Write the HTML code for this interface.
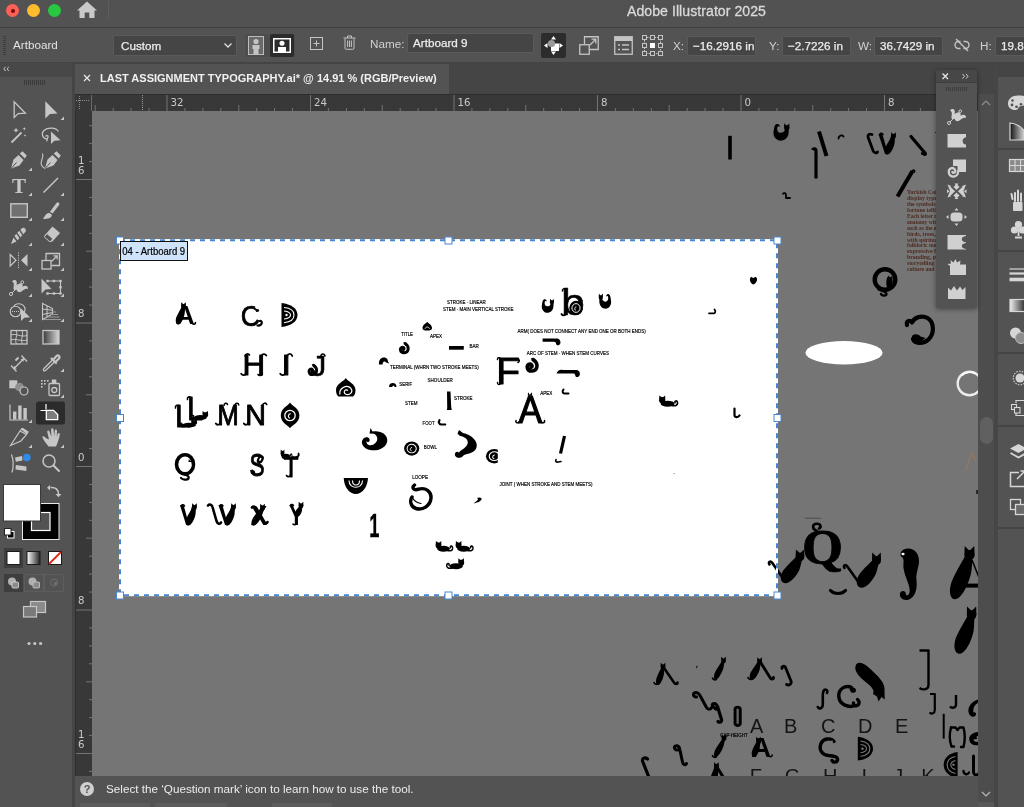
<!DOCTYPE html>
<html><head><meta charset="utf-8"><title>Adobe Illustrator 2025</title>
<style>
*{box-sizing:border-box;margin:0;padding:0}
html,body{width:1024px;height:807px;overflow:hidden;background:#535353}
body{position:relative;will-change:transform;font-family:"Liberation Sans",sans-serif;color:#e2e2e2;font-size:11.7px}
.abs,body>div,body>svg{position:absolute}
.t{position:absolute;white-space:nowrap;line-height:14px}
#titlebar{left:0;top:0;width:1024px;height:27px;background:#525252}
#titleline{left:0;top:27px;width:1024px;height:1px;background:#3f3f3f}
#ctrl{left:0;top:28px;width:1024px;height:35px;background:#535353;border-bottom:1px solid #444}
#tabbar{left:75px;top:63px;width:949px;height:31px;background:#454545}
#tab{left:75px;top:64px;width:374px;height:30px;background:#535353}
#lefthead{left:0;top:63px;width:72px;height:14px;background:#484848}
#leftbody{left:0;top:77px;width:72px;height:730px;background:#535353}
#leftsep{left:72px;top:63px;width:3px;height:744px;background:#454545}
#canvas{left:92px;top:111px;width:886px;height:665px;background:#757575;overflow:hidden}
#hruler{left:75px;top:94px;width:903px;height:17px;background:#383838;overflow:hidden}
#vruler{left:75px;top:111px;width:17px;height:665px;background:#383838;overflow:hidden}
#status{left:75px;top:776px;width:949px;height:31px;background:#535353}
.fld{position:absolute;background:#454545;border:1px solid #5a5a5a;border-radius:2px;color:#ececec;white-space:nowrap;line-height:14px;-webkit-text-stroke:.25px #ececec}
.lbl{color:#d0d0d0}
</style></head><body>
<div id="titlebar"></div>
<div id="titleline"></div>
<div id="ctrl"></div>
<div id="tabbar"></div>
<div id="tab"></div>
<div id="lefthead"></div>
<div id="leftbody"></div>
<div id="leftsep"></div>
<div id="status"></div>
<!-- title bar -->
<div style="left:6px;top:4px;width:13px;height:13px;border-radius:50%;background:#fe5f57"></div>
<div style="left:10.5px;top:8.5px;width:4px;height:4px;border-radius:50%;background:#7a0a05"></div>
<div style="left:27px;top:4px;width:13px;height:13px;border-radius:50%;background:#febc2e"></div>
<div style="left:48px;top:4px;width:13px;height:13px;border-radius:50%;background:#28c840"></div>
<svg style="left:76px;top:1px" width="22" height="18" viewBox="0 0 22 18"><path d="M11 0.5 L1 9.5 H3.5 V17 H8.7 V11.5 H13.3 V17 H18.5 V9.5 H21 Z" fill="#c9c9c9"/></svg>
<div style="left:108px;top:1px;width:1px;height:18px;background:#5e5e5e"></div>
<div class="t" style="left:627px;top:3px;font-size:14.1px;color:#d9d9d9;line-height:16px;-webkit-text-stroke:.3px #d9d9d9;letter-spacing:.05px">Adobe Illustrator 2025</div>
<!-- control bar -->
<div style="left:3px;top:36px;width:3px;height:20px;background:repeating-linear-gradient(#3e3e3e 0 1px,#535353 1px 2px)"></div>
<div class="t" style="left:13px;top:38px">Artboard</div>
<div class="fld" style="left:113px;top:35px;width:124px;height:21px;padding:3px 0 0 7px">Custom</div>
<svg style="left:223px;top:42px" width="10" height="7" viewBox="0 0 10 7"><path d="M1.5 1.5 L5 5 L8.5 1.5" fill="none" stroke="#e0e0e0" stroke-width="1.3"/></svg>
<div style="left:245px;top:34px;width:50px;height:23px;background:#4d4d4d;border-radius:2px"></div>
<svg style="left:248px;top:36px" width="16" height="19" viewBox="0 0 16 19"><rect x="0.5" y="0.5" width="15" height="18" fill="#6a6a6a" stroke="#bdbdbd"/><circle cx="8" cy="5.5" r="2.6" fill="#c4c4c4"/><path d="M4.5 9 H11.5 V13 H10.5 V18 H5.5 V13 H4.5 Z" fill="#c4c4c4"/></svg>
<div style="left:270px;top:34px;width:24px;height:23px;background:#2c2c2c;border-radius:2px"></div>
<svg style="left:273px;top:38px" width="18" height="15" viewBox="0 0 18 15"><rect x="0.75" y="0.75" width="16.5" height="13.5" fill="#2c2c2c" stroke="#fff" stroke-width="1.5"/><circle cx="9" cy="5.3" r="2.5" fill="#fff"/><path d="M5 9 H13 V14 H5 Z" fill="#fff"/></svg>
<svg style="left:310px;top:37px" width="13" height="13" viewBox="0 0 13 13"><rect x="0.5" y="0.5" width="12" height="12" fill="none" stroke="#c4c4c4"/><path d="M6.5 3.5 V9.5 M3.5 6.5 H9.5" stroke="#c4c4c4" stroke-width="1"/></svg>
<svg style="left:343px;top:35px" width="13" height="15" viewBox="0 0 13 15"><path d="M0.5 3 H12.5 M4.5 3 V1 H8.5 V3 M2 3.5 V13 Q2 14.3 3.3 14.3 H9.7 Q11 14.3 11 13 V3.5 M4.6 5.5 V12 M6.5 5.5 V12 M8.4 5.5 V12" fill="none" stroke="#c4c4c4" stroke-width="1"/></svg>
<div class="t lbl" style="left:370px;top:37px">Name:</div>
<div class="fld" style="left:407px;top:33px;width:127px;height:20px;padding:2px 0 0 5px">Artboard 9</div>
<div style="left:541px;top:33px;width:25px;height:25px;background:#2c2c2c;border-radius:2px"></div>
<svg style="left:543px;top:35px" width="21" height="21" viewBox="0 0 21 21"><path d="M10.5 1 L13 4.5 H8 Z M10.5 20 L13 16.5 H8 Z M1 10.5 L4.5 8 V13 Z M20 10.5 L16.5 8 V13 Z" fill="#fff"/><rect x="8" y="8.5" width="8" height="7.5" fill="#fff"/><circle cx="8.5" cy="8.5" r="3.6" fill="#9a9a9a"/></svg>
<svg style="left:579px;top:36px" width="20" height="19" viewBox="0 0 20 19"><rect x="0.75" y="8.75" width="9.5" height="9.5" fill="none" stroke="#c4c4c4" stroke-width="1.3"/><path d="M5.5 8.5 V0.75 H19.25 V13.5 H10.5" fill="none" stroke="#c4c4c4" stroke-width="1.3"/><path d="M11 9 L16.5 3.5 M12.5 3.2 H16.8 V7.5" fill="none" stroke="#c4c4c4" stroke-width="1.3"/></svg>
<svg style="left:614px;top:36px" width="19" height="19" viewBox="0 0 19 19"><rect x="0.75" y="0.75" width="17.5" height="17.5" fill="none" stroke="#c4c4c4" stroke-width="1.3"/><rect x="1" y="1" width="17" height="4" fill="#c4c4c4"/><path d="M4 9 H6 M8 9 H15 M4 13.5 H6 M8 13.5 H15" stroke="#c4c4c4" stroke-width="1.6"/></svg>
<svg style="left:642px;top:35px" width="21" height="21" viewBox="0 0 21 21"><path d="M2.5 2.5 H18.5 V18.5 H2.5 Z" fill="none" stroke="#c4c4c4" stroke-width="1" stroke-dasharray="1.5 1"/><g fill="#535353" stroke="#c4c4c4" stroke-width="1"><rect x="0.5" y="0.5" width="4" height="4"/><rect x="8.5" y="0.5" width="4" height="4"/><rect x="16.5" y="0.5" width="4" height="4"/><rect x="0.5" y="8.5" width="4" height="4"/><rect x="16.5" y="8.5" width="4" height="4"/><rect x="0.5" y="16.5" width="4" height="4"/><rect x="8.5" y="16.5" width="4" height="4"/><rect x="16.5" y="16.5" width="4" height="4"/></g><rect x="8" y="8" width="5" height="5" fill="#fff"/></svg>
<div class="t lbl" style="left:673px;top:39px">X:</div>
<div class="fld" style="left:687px;top:36px;width:69px;height:20px;padding:2px 0 0 5px">−16.2916 in</div>
<div class="t lbl" style="left:769px;top:39px">Y:</div>
<div class="fld" style="left:782px;top:36px;width:69px;height:20px;padding:2px 0 0 5px">−2.7226 in</div>
<div class="t lbl" style="left:858px;top:39px">W:</div>
<div class="fld" style="left:874px;top:36px;width:69px;height:20px;padding:2px 0 0 5px">36.7429 in</div>
<svg style="left:954px;top:38px" width="16" height="14" viewBox="0 0 16 14"><path d="M6.5 10.5 H4.5 A3.5 3.5 0 0 1 4.5 3.5 H6.5 M9.5 3.5 H11.5 A3.5 3.5 0 0 1 11.5 10.5 H9.5" fill="none" stroke="#c4c4c4" stroke-width="1.4"/><path d="M2 1 L14 13" stroke="#c4c4c4" stroke-width="1.4"/></svg>
<div class="t lbl" style="left:980px;top:39px">H:</div>
<div class="fld" style="left:995px;top:36px;width:40px;height:20px;padding:2px 0 0 5px">19.8</div>
<!-- tab -->
<svg style="left:83px;top:74px" width="8" height="8" viewBox="0 0 8 8"><path d="M1 1 L7 7 M7 1 L1 7" stroke="#e8e8e8" stroke-width="1.3"/></svg>
<div class="t" style="left:100px;top:71px;font-size:11px;font-weight:bold;color:#f0f0f0">LAST ASSIGNMENT TYPOGRAPHY.ai* @ 14.91 % (RGB/Preview)</div>
<!-- left head -->
<div class="t" style="left:3px;top:62px;font-size:10px;color:#c8c8c8;letter-spacing:0px">‹‹</div>
<div style="left:24px;top:80px;width:21px;height:5px;background:repeating-linear-gradient(90deg,#3b3b3b 0 1px,#535353 1px 2px)"></div>
<!-- status -->
<div style="left:80px;top:782px;width:14px;height:14px;border-radius:50%;background:#cfcfcf;color:#535353;font-weight:bold;font-size:11px;text-align:center;line-height:14px">?</div>
<div class="t" style="left:106px;top:782px;color:#ececec">Select the ‘Question mark’ icon to learn how to use the tool.</div>
<div style="left:80px;top:803px;width:70px;height:4px;background:#5c5c5c"></div>
<div style="left:155px;top:803px;width:72px;height:4px;background:#5c5c5c"></div>
<div style="left:272px;top:803px;width:60px;height:4px;background:#5c5c5c"></div>
<div id="canvas"></div>
<div id="hruler"></div><div id="vruler"></div>
<svg style="left:75px;top:94px" width="903" height="17" viewBox="75 94 903 17" font-family="'DejaVu Sans','Liberation Sans',sans-serif" font-size="10.2" fill="#c9c9c9"><rect x="75" y="94" width="903" height="1" fill="#2e2e2e"/><path d="M95.2 105V111M113.2 108V111M131.1 108V111M149.1 108V111M167.0 95V111M184.9 108V111M202.9 108V111M220.8 108V111M238.8 105V111M256.7 108V111M274.6 108V111M292.6 108V111M310.5 95V111M328.4 108V111M346.4 108V111M364.3 108V111M382.2 105V111M400.2 108V111M418.1 108V111M436.1 108V111M454.0 95V111M471.9 108V111M489.9 108V111M507.8 108V111M525.8 105V111M543.7 108V111M561.6 108V111M579.6 108V111M597.5 95V111M615.4 108V111M633.4 108V111M651.3 108V111M669.2 105V111M687.2 108V111M705.1 108V111M723.1 108V111M741.0 95V111M758.9 108V111M776.9 108V111M794.8 108V111M812.8 105V111M830.7 108V111M848.6 108V111M866.6 108V111M884.5 95V111M902.4 108V111M920.4 108V111M938.3 108V111M956.2 105V111M974.2 108V111" stroke="#747474" stroke-width="1" fill="none"/><text x="170.5" y="105.5">32</text><text x="314.0" y="105.5">24</text><text x="457.5" y="105.5">16</text><text x="601.0" y="105.5">8</text><text x="744.5" y="105.5">0</text><text x="888.0" y="105.5">8</text><path d="M91.5 95V111" stroke="#6a6a6a" stroke-width="1"/><path d="M79.5 96V110M76 100.5H90" stroke="#8a8a8a" stroke-width="1" stroke-dasharray="1 1" fill="none"/><path d="M142.5 95V110" stroke="#9a9a9a" stroke-width="1" stroke-dasharray="1 1" fill="none"/></svg>
<svg style="left:75px;top:111px" width="17" height="665" viewBox="75 111 17 665" font-family="'DejaVu Sans','Liberation Sans',sans-serif" font-size="10.2" fill="#c9c9c9"><rect x="75" y="111" width="1" height="665" fill="#2e2e2e"/><path d="M89 771.4H92M76 753.5H92M89 735.6H92M89 717.6H92M89 699.7H92M86 681.8H92M89 663.8H92M89 645.9H92M89 627.9H92M76 610.0H92M89 592.1H92M89 574.1H92M89 556.2H92M86 538.2H92M89 520.3H92M89 502.4H92M89 484.4H92M76 466.5H92M89 448.6H92M89 430.6H92M89 412.7H92M86 394.8H92M89 376.8H92M89 358.9H92M89 340.9H92M76 323.0H92M89 305.1H92M89 287.1H92M89 269.2H92M86 251.2H92M89 233.3H92M89 215.4H92M89 197.4H92M76 179.5H92M89 161.6H92M89 143.6H92M89 125.7H92" stroke="#747474" stroke-width="1" fill="none"/><text x="78" y="164.0">1</text><text x="78" y="173.5">6</text><text x="78" y="317.0">8</text><text x="78" y="460.5">0</text><text x="78" y="604.0">8</text><text x="78" y="738.0">1</text><text x="78" y="747.5">6</text></svg>
<svg style="left:0;top:94px" width="74" height="570" viewBox="0 94 74 570" fill="none" stroke="none">
<defs>
<linearGradient id="gr1" x1="0" x2="1" y1="0" y2="0"><stop offset="0" stop-color="#3a3a3a"/><stop offset="1" stop-color="#d8d8d8"/></linearGradient>
<linearGradient id="gr2" x1="0" x2="1" y1="0" y2="0"><stop offset="0" stop-color="#ffffff"/><stop offset="1" stop-color="#222"/></linearGradient>
</defs>
<!-- row1 selection -->
<path d="M14.2 101.8 V117.5 L18.2 113.6 L25.4 113.2 Z" stroke="#c6c6c6" stroke-width="1.3" stroke-linejoin="miter"/>
<path d="M45.3 101.3 V118.5 L50 114 L57.5 113.6 Z" fill="#c6c6c6"/>
<path d="M64 120 v-3.5 l-3.5 3.5 z" fill="#c6c6c6"/>
<!-- row2 wand / lasso -->
<path d="M11.5 142.5 L21.5 132.5" stroke="#c6c6c6" stroke-width="1.8"/>
<path d="M16 127.5 l.8 2 2 .8 -2 .8 -.8 2 -.8 -2 -2 -.8 2 -.8z M24.3 127 l.5 1.3 1.3 .5 -1.3 .5 -.5 1.3 -.5 -1.3 -1.3 -.5 1.3 -.5z M25 134 l.4 1 1 .4 -1 .4 -.4 1 -.4 -1 -1 -.4 1 -.4z" fill="#c6c6c6"/>
<path d="M48 139 C42 139 41 133 44 130.5 C48 127 56 127.5 58.5 131.5 M45.5 136.5 c1 -1.5 3 -1 2.5 .8 c-.5 1.5 -1.5 2 -1 4" stroke="#c6c6c6" stroke-width="1.2"/>
<path d="M51 131.5 V144 L54.3 140.8 L60.5 140.3 Z" fill="#c6c6c6"/>
<!-- row3 pen / curvature -->
<path d="M11 168.5 L13.5 159.5 L18.5 155 L23.5 160 L19.5 165.5 Z M19.8 153.6 L22.5 151.2 L26.8 155.6 L24.8 158.6 Z" fill="#c6c6c6"/>
<path d="M11.5 168 L16.5 162.5" stroke="#535353" stroke-width="1"/>
<path d="M32 171 v-3.5 l-3.5 3.5 z" fill="#c6c6c6"/>
<path d="M45 168.5 L47.5 159.5 L52.5 155 L57.5 160 L53.5 165.5 Z M53.8 153.6 L56.5 151.2 L60.8 155.6 L58.8 158.6 Z" fill="#c6c6c6"/>
<path d="M45.5 168 L50.5 162.5" stroke="#535353" stroke-width="1"/>
<path d="M42.5 153.5 C44.5 158 39.5 161 41.5 165 C42.5 167.5 44 168 45 168.5" stroke="#c6c6c6" stroke-width="1.1"/>
<!-- row4 type / line -->
<text x="19" y="192.5" text-anchor="middle" font-family="'Liberation Serif',serif" font-weight="bold" font-size="21" fill="#c6c6c6">T</text>
<path d="M32 196 v-3.5 l-3.5 3.5 z" fill="#c6c6c6"/>
<path d="M43.5 192.5 L58 178" stroke="#c6c6c6" stroke-width="1.5"/>
<path d="M64 196 v-3.5 l-3.5 3.5 z" fill="#c6c6c6"/>
<!-- row5 rect / brush -->
<rect x="10.8" y="203.8" width="16.5" height="13.5" fill="#707070" stroke="#c6c6c6" stroke-width="1.4"/>
<path d="M32 221 v-3.5 l-3.5 3.5 z" fill="#c6c6c6"/>
<path d="M58.2 202.5 C59.5 203 59.8 204 59 205.2 L52.5 213.5 L50 211.8 L56.3 203.2 C56.9 202.4 57.5 202.2 58.2 202.5 Z M49.2 212.8 L51.8 214.8 C52 217.5 49 219.5 42.5 218.8 C45 217.5 45 213.5 49.2 212.8 Z" fill="#c6c6c6"/>
<path d="M64 221 v-3.5 l-3.5 3.5 z" fill="#c6c6c6"/>
<!-- row6 shaper / eraser -->
<path d="M11 244 L13.5 237.5 L16.5 241.5 Z M14.5 236 L16.3 233.8 L19.5 238.3 L17.5 240.3 Z M17.3 232.8 L19.2 230.8 L22.3 235.2 L20.4 237.2 Z M20.3 229.8 L22 228.2 C24 226.5 27 229.5 25.5 231.8 L23.3 234.2 Z" fill="#c6c6c6"/>
<path d="M32 246 v-3.5 l-3.5 3.5 z" fill="#c6c6c6"/>
<path d="M52.5 226.5 L60 233 L52 242 L44.5 235.5 Z" fill="#c6c6c6"/>
<path d="M44.2 236.8 L47 233.6 L52.8 238.8 L50 242 Z" fill="#535353" stroke="#c6c6c6" stroke-width="1"/>
<path d="M64 246 v-3.5 l-3.5 3.5 z" fill="#c6c6c6"/>
<!-- row7 reflect / scale -->
<path d="M10.2 254.5 V266 L16 260.2 Z" stroke="#c6c6c6" stroke-width="1.2"/>
<path d="M27.5 254 V266.5 L21 260.2 Z" fill="#c6c6c6"/>
<path d="M18.5 252.5 V269" stroke="#c6c6c6" stroke-width="1" stroke-dasharray="1.2 1.2"/>
<path d="M32 271 v-3.5 l-3.5 3.5 z" fill="#c6c6c6"/>
<rect x="42" y="260.5" width="9" height="8.5" stroke="#c6c6c6" stroke-width="1.3"/>
<path d="M46 260 V253.5 H59.5 V265.5 H51.5" stroke="#c6c6c6" stroke-width="1.3"/>
<path d="M51.5 261.5 L57 256 M53.5 255.8 H57.2 V259.5" stroke="#c6c6c6" stroke-width="1.2"/>
<path d="M64 271 v-3.5 l-3.5 3.5 z" fill="#c6c6c6"/>
<!-- row8 width / free transform -->
<path d="M12 281.5 C15 278 18 281 16.5 285 C20 282 24 283.5 22.5 287 C25.5 284.5 28.5 286.5 28 289 C25.5 288 23.5 290 21.5 291.5 C19.5 293 17 292 16.5 289.5 C15 291 13 290 13.5 287.5 C14 285 14.5 283 12 281.5 Z" fill="#c6c6c6"/>
<path d="M11.5 293.5 L22 282.5" stroke="#c6c6c6" stroke-width="1"/>
<circle cx="11" cy="294" r="1.6" fill="#535353" stroke="#c6c6c6" stroke-width="1"/>
<circle cx="22.3" cy="282.2" r="1.4" fill="#535353" stroke="#c6c6c6" stroke-width="1"/>
<path d="M32 297 v-3.5 l-3.5 3.5 z" fill="#c6c6c6"/>
<path d="M41.5 278.5 V293.5 L45.5 289.5 L51.5 289 Z" fill="#c6c6c6"/>
<path d="M47.5 281 H60.5 V293.5 H47.5" stroke="#c6c6c6" stroke-width="1.1"/>
<g fill="#c6c6c6"><rect x="46.3" y="279.8" width="2.4" height="2.4"/><rect x="59.3" y="279.8" width="2.4" height="2.4"/><rect x="59.3" y="292.3" width="2.4" height="2.4"/><rect x="46.3" y="292.3" width="2.4" height="2.4"/><rect x="52.8" y="292.3" width="2.4" height="2.4"/><rect x="59.3" y="286" width="2.4" height="2.4"/><rect x="52.8" y="279.8" width="2.4" height="2.4"/></g>
<path d="M64 297 v-3.5 l-3.5 3.5 z" fill="#c6c6c6"/>
<!-- row9 shape builder / perspective -->
<circle cx="15.5" cy="311.5" r="5.3" stroke="#c6c6c6" stroke-width="1.1"/>
<path d="M14 306.5 C15 303 22 302.5 24.5 307 C25.5 309 25 311 24 312" stroke="#c6c6c6" stroke-width="1.1"/>
<path d="M12 311.5 H19" stroke="#c6c6c6" stroke-width="1" stroke-dasharray="1 1"/>
<path d="M21 308.5 V321 L24.3 317.8 L30 317.3 Z" fill="#c6c6c6"/>
<path d="M32 322 v-3.5 l-3.5 3.5 z" fill="#c6c6c6"/>
<path d="M42.5 303.5 V319.5 L52.5 314 V308.5 Z M47 306 V317 M42.5 309 L52.5 310.3 M42.5 314.5 L52.5 312.5" stroke="#c6c6c6" stroke-width="1.1"/>
<path d="M52 312 H56 M50 314.5 H58 M47.5 317 H59.5 M44 319.5 H61" stroke="#a0a0a0" stroke-width=".9"/>
<path d="M64 322 v-3.5 l-3.5 3.5 z" fill="#c6c6c6"/>
<!-- row10 mesh / gradient -->
<rect x="11" y="330.5" width="16" height="13.5" stroke="#c6c6c6" stroke-width="1.3"/>
<path d="M11 335 C16 333 21 337.5 27 335.5 M11 340 C16 338 21 342 27 340 M16 330.5 C18.5 335 14 339.5 16.5 344 M22 330.5 C24 335 20 339.5 22.5 344" stroke="#c6c6c6" stroke-width="1"/>
<rect x="43" y="330.5" width="16" height="13.5" fill="url(#gr1)" stroke="#c6c6c6" stroke-width="1.3"/>
<!-- row11 measure / eyedropper -->
<path d="M13.5 369 L24 358.5 M11 365.5 L16.5 371.5 M21.5 355.5 L27 361.5" stroke="#c6c6c6" stroke-width="1.3"/>
<path d="M13.5 369 l.5 -3.3 2.8 2.8z M24 358.5 l-.5 3.3 -2.8 -2.8z" fill="#c6c6c6"/>
<path d="M15.5 360.5 L18.5 357.5" stroke="#c6c6c6" stroke-width="2"/>
<path d="M52.5 360 L44 368.5 C42.5 370 44 371.8 45.8 370.3 L54.5 362" stroke="#c6c6c6" stroke-width="1.3"/>
<path d="M51.5 358.5 L56 363 M53 360 L56.5 356 C58 354.5 60.5 356.5 59 358.5 L55.2 362.2" stroke="#c6c6c6" stroke-width="2.2" stroke-linecap="round"/>
<path d="M64 372 v-3.5 l-3.5 3.5 z" fill="#c6c6c6"/>
<!-- row12 blend / symbol sprayer -->
<rect x="9.3" y="380.3" width="8" height="8" fill="#c6c6c6"/>
<circle cx="19.5" cy="387" r="4.3" fill="#8e8e8e"/>
<circle cx="24" cy="391" r="4" fill="#535353" stroke="#c6c6c6" stroke-width="1.2"/>
<rect x="49" y="383.5" width="10.5" height="12" rx="1" stroke="#c6c6c6" stroke-width="1.3"/>
<rect x="51.8" y="379.5" width="4.5" height="3.5" fill="#c6c6c6"/>
<circle cx="54.3" cy="390" r="2.5" stroke="#c6c6c6" stroke-width="1.3"/>
<g fill="#c6c6c6"><rect x="41" y="380" width="1.6" height="1.6"/><rect x="44" y="380" width="1.6" height="1.6"/><rect x="47" y="380" width="1.6" height="1.6"/><rect x="41" y="383" width="1.6" height="1.6"/><rect x="44" y="383" width="1.6" height="1.6"/><rect x="41" y="386" width="1.6" height="1.6"/></g>
<path d="M64 398 v-3.5 l-3.5 3.5 z" fill="#c6c6c6"/>
<!-- row13 graph / artboard -->
<path d="M10 404.5 V420 H28" stroke="#c6c6c6" stroke-width="1.2"/>
<rect x="13" y="411.5" width="3.4" height="8" fill="#c6c6c6"/><rect x="18.2" y="405.5" width="3.4" height="14" fill="#c6c6c6"/><rect x="23.4" y="408" width="3.4" height="11.5" fill="#c6c6c6"/>
<path d="M32 423 v-3.5 l-3.5 3.5 z" fill="#c6c6c6"/>
<rect x="36" y="401.5" width="29" height="23" rx="2.5" fill="#2b2b2b"/>
<path d="M46 404 V409.5 M40.5 410.5 H46" stroke="#fff" stroke-width="1.2"/>
<path d="M46.3 410.3 H53.5 L57.7 414.5 V419.7 H46.3 Z" fill="#7c7c7c" stroke="#fff" stroke-width="1.3"/>
<!-- row14 slice / hand -->
<path d="M10.5 445.5 L20 431 L26.5 434.5 L21 441 Z M20 431 L22 428.5 L28 432 L26.5 434.5" stroke="#c6c6c6" stroke-width="1.2"/>
<path d="M21 429.5 L23 428 L28.3 431.8 L26.8 434 Z" fill="#c6c6c6"/>
<path d="M32 448 v-3.5 l-3.5 3.5 z" fill="#c6c6c6"/>
<path d="M46.5 438.5 C44 436 42 435.5 42.5 437.5 C43.5 440 46 443 48.5 446.5 H56 C57.5 443 59.5 438 59.8 434.5 C60 432.5 58 432.5 57.5 434.5 L56.8 437.5 L57 431 C57 429 54.8 429 54.7 431 L54.3 436.5 L53.5 429.5 C53.2 427.5 51 428 51.1 430 L51.4 436.8 L49.5 431.5 C48.8 429.8 46.8 430.5 47.3 432.3 L49 439.5 Z" fill="#c6c6c6"/>
<path d="M64 448 v-3.5 l-3.5 3.5 z" fill="#c6c6c6"/>
<!-- row15 puppet / zoom -->
<path d="M11.5 454.5 C13.5 460 13.5 467 12 472.5" stroke="#c6c6c6" stroke-width="1.2"/>
<path d="M15 457.5 L22 456 L22.5 460.5 L15.8 461.8 Z M15.8 465 L26.5 466.5 L26.3 471 L15.5 469.5 Z" fill="#c6c6c6"/>
<circle cx="26.8" cy="457.5" r="3.8" fill="#2d8ceb"/>
<circle cx="49" cy="461" r="6" stroke="#c6c6c6" stroke-width="1.5"/>
<path d="M53.5 465.5 L59 471" stroke="#c6c6c6" stroke-width="2" stroke-linecap="round"/>
<!-- fill/stroke -->
<rect x="22.5" y="503.5" width="36.5" height="36" fill="#000" stroke="#e8e8e8" stroke-width="1"/>
<rect x="31.5" y="512.5" width="18.5" height="18" fill="#535353" stroke="#fff" stroke-width="1.2"/>
<rect x="3.5" y="484.5" width="37" height="36.5" fill="#fff" stroke="#3a3a3a" stroke-width="1"/>
<path d="M50.5 487.5 C55.5 487 58.5 489.5 58.5 494.5" stroke="#c6c6c6" stroke-width="1.6"/>
<path d="M50 485 V490.5 L47 487.8 Z M55.5 494 H61.5 L58.5 497.2 Z" fill="#c6c6c6"/>
<rect x="7.5" y="531.5" width="6.5" height="6.5" fill="#000" stroke="#fff" stroke-width="1"/>
<rect x="4.5" y="528.5" width="6.5" height="6.5" fill="#fff" stroke="#222" stroke-width="1"/>
<!-- color modes -->
<rect x="4" y="548" width="19" height="20" fill="#3e3e3e"/>
<rect x="7" y="551.5" width="13" height="13" fill="#fff" stroke="#1a1a1a" stroke-width="1"/>
<rect x="27" y="551.5" width="13" height="13" fill="url(#gr2)" stroke="#1a1a1a" stroke-width="1"/>
<rect x="48.5" y="551.5" width="13" height="13" fill="#fff" stroke="#1a1a1a" stroke-width="1"/>
<path d="M49 564 L61 552" stroke="#e0261c" stroke-width="1.8"/>
<!-- draw modes -->
<rect x="4" y="574" width="19" height="18" fill="#3e3e3e"/>
<rect x="24.5" y="574.5" width="19" height="17" stroke="#5d5d5d" stroke-width="1"/>
<rect x="44.5" y="574.5" width="19" height="17" stroke="#5d5d5d" stroke-width="1"/>
<circle cx="12" cy="581.5" r="4" fill="#b0b0b0"/><rect x="12" y="582" width="6.5" height="6" rx="1" fill="#8a8a8a" stroke="#ddd" stroke-width=".8"/>
<circle cx="32.5" cy="581.5" r="4" fill="#b0b0b0"/><rect x="33" y="582" width="6.5" height="6" rx="1" fill="#8a8a8a" stroke="#ccc" stroke-width=".8"/>
<circle cx="54" cy="582.5" r="3.5" stroke="#6e6e6e" stroke-width="1"/><circle cx="55.5" cy="583.5" r="1.8" fill="#6e6e6e"/>
<!-- screen mode -->
<rect x="30.5" y="601.5" width="15" height="11" fill="#8a8a8a" stroke="#c6c6c6" stroke-width="1.2"/>
<rect x="23.500" y="606.5" width="13" height="10.500" fill="#7a7a7a" stroke="#c6c6c6" stroke-width="1.2"/>
<circle cx="29" cy="643.5" r="1.6" fill="#c6c6c6"/><circle cx="34.800" cy="643.5" r="1.6" fill="#c6c6c6"/><circle cx="40.600" cy="643.5" r="1.6" fill="#c6c6c6"/>
</svg>
<!-- scrollbar + right dock -->
<div style="left:978px;top:94px;width:16px;height:708px;background:#4d4d4d"></div>
<div style="left:978px;top:802px;width:16px;height:5px;background:#585858"></div>
<div style="left:994px;top:63px;width:4px;height:744px;background:#464646"></div>
<div style="left:998px;top:77px;width:26px;height:730px;background:#535353"></div>
<div style="left:998px;top:148px;width:26px;height:2px;background:#454545"></div>
<div style="left:998px;top:250px;width:26px;height:2px;background:#454545"></div>
<div style="left:998px;top:352px;width:26px;height:2px;background:#454545"></div>
<div style="left:998px;top:425px;width:26px;height:2px;background:#454545"></div>
<div style="left:998px;top:527px;width:26px;height:2px;background:#454545"></div>
<div style="left:980px;top:417px;width:13px;height:27px;border-radius:6.5px;background:#606060"></div>
<svg style="left:980px;top:99px" width="12" height="8" viewBox="0 0 12 8"><path d="M2 6 L6 2 L10 6" fill="none" stroke="#8e8e8e" stroke-width="1.2"/></svg>
<svg style="left:980px;top:790px" width="12" height="8" viewBox="0 0 12 8"><path d="M2 2 L6 6 L10 2" fill="none" stroke="#b8b8b8" stroke-width="1.2"/></svg>
<svg style="left:998px;top:77px" width="26" height="460" viewBox="998 77 26 460" fill="none">
<defs><linearGradient id="cg" x1="0" x2="1"><stop offset="0" stop-color="#111"/><stop offset="1" stop-color="#eee"/></linearGradient>
<linearGradient id="gg" x1="0" x2="1"><stop offset="0" stop-color="#eee"/><stop offset="1" stop-color="#222"/></linearGradient></defs>
<!-- palette -->
<path d="M1018 95.500 C1012 95.500 1008 99 1008 103.500 C1008 108 1012 110.500 1016 110 C1018.500 109.700 1018 107.500 1019.500 106.500 C1021 105.500 1024 106.500 1026 104 V96.500 C1023.500 95.700 1021 95.500 1018 95.500 Z" fill="#d6d6d6"/>
<g fill="#535353"><circle cx="1012" cy="105" r="1.400"/><circle cx="1016.500" cy="106.800" r="1.400"/><circle cx="1012.500" cy="100.500" r="1.300"/><circle cx="1021" cy="104.300" r="1.300"/></g>
<!-- color guide -->
<path d="M1010 123 V140 H1026 V133 C1022 127 1016 123.500 1010 123 Z" fill="url(#cg)" stroke="#d6d6d6" stroke-width="1.200"/>
<!-- swatches -->
<rect x="1009.500" y="159.500" width="16" height="12" fill="#8a8a8a" stroke="#d6d6d6" stroke-width="1.200"/>
<path d="M1009.500 165.500 H1026 M1015 159.500 V171.500 M1020.500 159.500 V171.500" stroke="#d6d6d6" stroke-width="1.100"/>
<!-- brushes -->
<rect x="1013" y="202" width="9.500" height="9" rx="1" fill="#d6d6d6"/>
<path d="M1015 201 V193 M1018 201 V190.500 M1021 201 V193.500 M1012.500 199 L1011.500 194" stroke="#d6d6d6" stroke-width="2" stroke-linecap="round"/>
<!-- symbols club -->
<circle cx="1018.500" cy="224.500" r="3.600" fill="#d6d6d6"/><circle cx="1014.500" cy="230" r="3.600" fill="#d6d6d6"/><circle cx="1022.500" cy="230" r="3.600" fill="#d6d6d6"/>
<path d="M1018.500 228 V236 M1015 237.500 H1022" stroke="#d6d6d6" stroke-width="1.800"/>
<!-- stroke -->
<path d="M1009.500 269 H1026" stroke="#d6d6d6" stroke-width="1.200"/><path d="M1009.500 273.500 H1026" stroke="#d6d6d6" stroke-width="2.200"/><path d="M1009.500 279.500 H1026" stroke="#d6d6d6" stroke-width="3.600"/>
<!-- gradient -->
<rect x="1010" y="299.500" width="16" height="12" fill="url(#gg)" stroke="#d6d6d6" stroke-width="1.200"/>
<!-- transparency -->
<circle cx="1015.500" cy="333" r="5.500" fill="#d6d6d6"/><circle cx="1021" cy="338" r="5.500" fill="#8c8c8c" stroke="#bdbdbd" stroke-width="1"/>
<!-- appearance -->
<circle cx="1020" cy="378" r="6.800" stroke="#d6d6d6" stroke-width="1.100" stroke-dasharray="1.500 1.300"/><circle cx="1020" cy="378" r="4.500" fill="#d6d6d6"/>
<!-- graphic styles -->
<path d="M1016 403 V400.500 H1026 M1016 413 V415.500 H1026" stroke="#d6d6d6" stroke-width="1.200"/>
<rect x="1011.500" y="404.500" width="5" height="5" stroke="#d6d6d6" stroke-width="1.100"/><rect x="1014.500" y="407.500" width="5.500" height="5.500" fill="#535353" stroke="#d6d6d6" stroke-width="1.100"/>
<!-- layers -->
<path d="M1018.500 444 L1027 448.500 L1018.500 453 L1010 448.500 Z" fill="#d6d6d6"/><path d="M1010.500 453 L1018.500 457.500 L1026.500 453" stroke="#d6d6d6" stroke-width="1.800"/>
<!-- asset export -->
<path d="M1019 472.500 H1010.500 V486.500 H1024" stroke="#d6d6d6" stroke-width="1.500"/><path d="M1017 479 L1024 472 M1020.500 471 H1025" stroke="#d6d6d6" stroke-width="1.500"/>
<!-- artboards -->
<rect x="1010.500" y="499.500" width="10" height="10" stroke="#d6d6d6" stroke-width="1.300"/><rect x="1015.500" y="504.500" width="10" height="10" fill="#6a6a6a" stroke="#d6d6d6" stroke-width="1.300"/>
</svg>
<svg style="left:92px;top:111px" width="886" height="665" viewBox="92 111 886 665">
<rect x="119" y="239.500" width="658" height="356" fill="#fff"/>
<path d="M728.2 135.8 H731.8 V159.5 H728.2 Z" fill="#000"/>
<g transform="matrix(1.0056 0 0 1.0765 771.40 122.50)"><path d="M2.5 6.500 C0.500 13 5 17.500 10.500 16.800 C15.500 16 18 11.500 17 6.500 L14.500 3 C14.500 6.500 12.500 9.500 9.500 9.500 C6.500 9.500 5.500 7 5.800 5 C6 3.200 8 3 8.200 4.500 C9 2.500 7 0.800 5 1.500 C3.200 2.200 2.800 4.500 2.500 6.500 Z"/><circle cx="15.200" cy="5.200" r="2.600"/><path d="M12.500 5 L12.800 0.800 L15 3 Z M15.500 3 L17.800 1 L17.900 5.500 Z"/></g>
<path d="M819 131.5 L826.5 156" fill="none" stroke="#000" stroke-width="4" stroke-linecap="butt" stroke-linejoin="round"/>
<path d="M812.500 150 C813.500 148 816 148.500 816 151 V178.500" fill="none" stroke="#000" stroke-width="3.2" stroke-linecap="butt" stroke-linejoin="round"/>
<path d="M838.500 138.500 C838.500 135.500 842 134.500 843.500 136.500" fill="none" stroke="#000" stroke-width="1.8" stroke-linecap="round" stroke-linejoin="round"/>
<path d="M872 134.500 C869.500 133.500 867.500 134.500 868 137 L873 150.500 C874 153 876.500 153.500 877.500 152" fill="none" stroke="#000" stroke-width="2.8" stroke-linecap="round" stroke-linejoin="round"/>
<text transform="matrix(0.2605 0 0 0.2982 878.30 154.00)" font-family="'Liberation Sans',sans-serif" font-weight="bold" font-size="100" fill="#000">V</text>
<path d="M886.5 154.5 C889.5 155.7 893.1 149.8 894.4 144.1 C894.9 141.2 894.7 139.0 895.0 137.1 L892.0 135.9 C890.6 138.5 887.7 142.5 885.6 146.9 C884.2 150.5 884.6 153.8 886.5 154.5 Z" fill="#000"/>
<circle cx="893.5" cy="136.5" r="2.4"/>
<path d="M891.1 136.5 L891.2 132.3 L893.4 134.3 Z M893.6 134.3 L895.8 132.3 L895.9 136.5 Z" fill="#000"/>
<path d="M880 135 C879.500 133 882.500 132.500 883 134.500" fill="none" stroke="#000" stroke-width="1.5" stroke-linecap="round" stroke-linejoin="round"/>
<path d="M911 136.500 L924.500 152.500 C926.500 154.500 925 155 922.500 153.500" fill="none" stroke="#000" stroke-width="3.2" stroke-linecap="round" stroke-linejoin="round"/>
<path d="M912.500 171 L897.500 196.500" fill="none" stroke="#000" stroke-width="4" stroke-linecap="butt" stroke-linejoin="round"/>
<path d="M912.500 171 C913.500 169.500 915 170 914.500 172" fill="none" stroke="#000" stroke-width="1.6" stroke-linecap="round" stroke-linejoin="round"/>
<path d="M783 193.800 C784 192.500 786 193 786 195 V198 H790" fill="none" stroke="#000" stroke-width="1.8" stroke-linecap="round" stroke-linejoin="round"/>
<text x="907" y="194.3" font-family="'Liberation Serif',serif" font-weight="bold" font-size="5.3" fill="#4d2b20" textLength="32" lengthAdjust="spacingAndGlyphs">Turkish Coff</text>
<text x="907" y="200.2" font-family="'Liberation Serif',serif" font-weight="bold" font-size="5.3" fill="#4d2b20" textLength="32" lengthAdjust="spacingAndGlyphs">display typef</text>
<text x="907" y="206.1" font-family="'Liberation Serif',serif" font-weight="bold" font-size="5.3" fill="#4d2b20" textLength="32" lengthAdjust="spacingAndGlyphs">the symbols f</text>
<text x="907" y="212.0" font-family="'Liberation Serif',serif" font-weight="bold" font-size="5.3" fill="#4d2b20" textLength="32" lengthAdjust="spacingAndGlyphs">fortune tellin</text>
<text x="907" y="217.9" font-family="'Liberation Serif',serif" font-weight="bold" font-size="5.3" fill="#4d2b20" textLength="32" lengthAdjust="spacingAndGlyphs">Each letter m</text>
<text x="907" y="223.8" font-family="'Liberation Serif',serif" font-weight="bold" font-size="5.3" fill="#4d2b20" textLength="32" lengthAdjust="spacingAndGlyphs">anatomy with</text>
<text x="907" y="229.7" font-family="'Liberation Serif',serif" font-weight="bold" font-size="5.3" fill="#4d2b20" textLength="32" lengthAdjust="spacingAndGlyphs">such as the ev</text>
<text x="907" y="235.6" font-family="'Liberation Serif',serif" font-weight="bold" font-size="5.3" fill="#4d2b20" textLength="32" lengthAdjust="spacingAndGlyphs">birds, trees, f</text>
<text x="907" y="241.5" font-family="'Liberation Serif',serif" font-weight="bold" font-size="5.3" fill="#4d2b20" textLength="32" lengthAdjust="spacingAndGlyphs">with spiritual</text>
<text x="907" y="247.4" font-family="'Liberation Serif',serif" font-weight="bold" font-size="5.3" fill="#4d2b20" textLength="32" lengthAdjust="spacingAndGlyphs">folkloric mea</text>
<text x="907" y="253.3" font-family="'Liberation Serif',serif" font-weight="bold" font-size="5.3" fill="#4d2b20" textLength="32" lengthAdjust="spacingAndGlyphs">expressive fo</text>
<text x="907" y="259.2" font-family="'Liberation Serif',serif" font-weight="bold" font-size="5.3" fill="#4d2b20" textLength="32" lengthAdjust="spacingAndGlyphs">branding, pa</text>
<text x="907" y="265.1" font-family="'Liberation Serif',serif" font-weight="bold" font-size="5.3" fill="#4d2b20" textLength="32" lengthAdjust="spacingAndGlyphs">storytelling p</text>
<text x="907" y="271.0" font-family="'Liberation Serif',serif" font-weight="bold" font-size="5.3" fill="#4d2b20" textLength="32" lengthAdjust="spacingAndGlyphs">culture and d</text>
<path d="M935 132.500 l2 -1.500 l0 3 z" fill="#000"/>
<ellipse cx="885" cy="279.500" rx="10.300" ry="10.300" fill="none" stroke="#000" stroke-width="4.400"/>
<path d="M878.500 289.500 C882 291 887 292 886.500 294.500 C885.500 296.500 881.500 295.500 881 294" fill="none" stroke="#000" stroke-width="2.4" stroke-linecap="round" stroke-linejoin="round"/>
<path d="M887 278 L888.500 275.500 L890 277.500 L892 276 L892.500 279.500 C893 284 890 288 887.500 288 C886 286 886 281 887 278 Z" fill="#000"/>
<path d="M907 325 C906 321 909.500 319.500 912 322.500 C914 318 921 314.500 927.500 318 C934.500 322 934.500 334 928.500 339.500 C923 344.500 914.500 343.500 913 339" fill="none" stroke="#000" stroke-width="4.2" stroke-linecap="round" stroke-linejoin="round"/>
<path d="M912 336 C914 333.500 918.500 334 920.500 336.500 L925.500 338 L921 341.500 C917 344 911 341.500 912 336 Z" fill="#000"/>
<ellipse cx="844" cy="352.700" rx="38.600" ry="11.700" fill="#fff"/>
<circle cx="969.500" cy="383.500" r="11.800" fill="none" stroke="#ececec" stroke-width="2.400"/>
<path d="M962 375.500 C965 372 971 371.500 975 373.500" fill="none" stroke="#fff" stroke-width="1.4" stroke-linecap="round" stroke-linejoin="round"/>
<path d="M966 470 L972 452 L976 462" fill="none" stroke="#b07a50" stroke-width="1.600" opacity=".45"/>
<rect x="976.300" y="490" width="1.500" height="4" fill="#111"/>
<path d="M769.500 564.500 C768 562 770.500 560.500 772 562.500 L784.500 580.500" fill="none" stroke="#000" stroke-width="2.6" stroke-linecap="round" stroke-linejoin="round"/>
<path d="M783.0 582.5 C787.8 585.7 795.6 578.0 799.5 569.5 C801.1 565.1 801.3 561.6 802.4 558.6 L797.6 555.4 C794.4 558.8 788.4 564.0 783.5 570.0 C780.1 575.1 780.0 580.5 783.0 582.5 Z" fill="#000"/>
<circle cx="800.0" cy="557.0" r="4.3"/>
<path d="M795.6 557.0 L795.9 549.4 L799.8 553.1 Z M800.2 553.1 L804.1 549.4 L804.4 557.0 Z" fill="#000"/>
<path d="M804.700 518.200 H821.200" stroke="#4a4a4a" stroke-width=".900"/>
<text transform="matrix(0.5279 0 0 0.5115 802.06 564.29)" font-family="'Liberation Serif',serif" font-weight="bold" font-size="100" fill="#000" stroke="#000" stroke-width="1.54" stroke-linejoin="round">Q</text>
<path d="M817 531 C811.500 529 812 523.500 817 523.800 C821 524 821.500 527.500 819 528.500" fill="none" stroke="#000" stroke-width="2.6" stroke-linecap="round" stroke-linejoin="round"/>
<path d="M844.500 568 C843 565.500 845.500 564 847 566 L860.500 585" fill="none" stroke="#000" stroke-width="2.6" stroke-linecap="round" stroke-linejoin="round"/>
<path d="M859.0 587.0 C864.0 590.3 872.0 582.3 876.0 573.5 C877.7 568.9 877.9 565.2 879.0 562.2 L874.0 558.8 C870.7 562.4 864.5 567.8 859.5 574.0 C856.0 579.3 855.9 584.9 859.0 587.0 Z" fill="#000"/>
<circle cx="876.5" cy="560.5" r="4.5"/>
<path d="M872.0 560.5 L872.2 552.6 L876.3 556.5 Z M876.7 556.5 L880.8 552.6 L881.0 560.5 Z" fill="#000"/>
<path d="M830.500 590.500 C834 594.500 842 594.500 845.500 590.500" fill="none" stroke="#000" stroke-width="3.2" stroke-linecap="round" stroke-linejoin="round"/>
<path d="M906 548.700 C913 547 919 552.500 919 561 C919 568 915.500 573 916.500 580.500 C917.500 589 915 597.500 908.500 599.700 C903 601 899 597.500 900 593.500 C901 590 905.800 590.500 905.800 593.500 C905.500 596 908.500 596.200 909.500 592.500 C911 586 904.500 577 903.500 568 C903 562 905 558.500 901 556.500 C899.500 552.500 902 549.500 906 548.700 Z" fill="#000"/>
<ellipse cx="903" cy="554" rx="1.600" ry="1.200" fill="#fff"/>
<path d="M953.5 599.0 C959.9 601.3 967.9 586.8 971.1 573.0 C972.3 566.0 971.9 560.9 972.7 556.2 L966.3 553.8 C963.1 560.1 956.7 570.3 951.9 581.0 C948.7 589.8 949.5 597.5 953.5 599.0 Z" fill="#000"/>
<circle cx="969.5" cy="555.0" r="5.1"/>
<path d="M964.4 555.0 L964.7 546.1 L969.2 550.4 Z M969.8 550.4 L974.3 546.1 L974.6 555.0 Z" fill="#000"/>
<path d="M964 585.600 H980" fill="none" stroke="#000" stroke-width="4" stroke-linecap="butt" stroke-linejoin="round"/>
<path d="M972 560 L980 580" fill="none" stroke="#000" stroke-width="1.5" stroke-linecap="butt" stroke-linejoin="round"/>
<path d="M958.0 653.5 C964.0 655.6 971.1 643.0 973.6 630.9 C974.5 624.7 974.0 620.2 974.6 616.1 L968.6 613.9 C965.8 619.4 960.1 628.3 956.0 637.6 C953.3 645.3 954.2 652.2 958.0 653.5 Z" fill="#000"/>
<circle cx="971.6" cy="615.0" r="4.8"/>
<path d="M966.8 615.0 L967.0 606.6 L971.4 610.7 Z M971.8 610.7 L976.2 606.6 L976.4 615.0 Z" fill="#000"/>
<path d="M657.5 685.0 C660.0 685.8 662.8 679.7 663.9 674.2 C664.2 671.3 664.0 669.3 664.2 667.4 L661.8 666.6 C660.6 669.2 658.3 673.4 656.6 677.8 C655.5 681.4 655.9 684.5 657.5 685.0 Z" fill="#000"/>
<circle cx="663.0" cy="667.0" r="2.4"/>
<path d="M660.6 667.0 L660.7 662.8 L662.9 664.8 Z M663.1 664.8 L665.3 662.8 L665.4 667.0 Z" fill="#000"/>
<path d="M664 668 L674 682.500 C675 684.500 677.500 684.500 677.500 682.500" fill="none" stroke="#000" stroke-width="2.6" stroke-linecap="round" stroke-linejoin="round"/>
<path d="M654 682.500 C654.500 684.500 657 685 658.500 683.500" fill="none" stroke="#000" stroke-width="1.6" stroke-linecap="round" stroke-linejoin="round"/>
<path d="M696 666.500 l1.600 -1 l-.800 3.200 z" fill="#000"/>
<path d="M715.0 679.5 C717.4 680.6 721.2 674.5 723.2 668.7 C724.0 665.7 724.1 663.5 724.7 661.5 L722.3 660.5 C720.7 663.1 717.7 667.3 715.3 671.8 C713.6 675.5 713.5 678.8 715.0 679.5 Z" fill="#000"/>
<circle cx="723.5" cy="661.0" r="2.4"/>
<path d="M721.1 661.0 L721.2 656.8 L723.4 658.8 Z M723.6 658.8 L725.8 656.8 L725.9 661.0 Z" fill="#000"/>
<path d="M712.500 678 C713 680 715.500 680.500 716.500 679" fill="none" stroke="#000" stroke-width="1.6" stroke-linecap="round" stroke-linejoin="round"/>
<path d="M751.0 680.0 C753.7 681.3 757.8 675.3 759.7 669.4 C760.4 666.4 760.4 664.1 761.0 662.1 L758.2 660.9 C756.6 663.5 753.4 667.6 750.9 672.1 C749.2 675.8 749.3 679.2 751.0 680.0 Z" fill="#000"/>
<circle cx="759.6" cy="661.5" r="2.4"/>
<path d="M757.2 661.5 L757.3 657.3 L759.5 659.3 Z M759.7 659.3 L761.9 657.3 L762.0 661.5 Z" fill="#000"/>
<path d="M761 663 L770 677.500 C771 679.500 773.500 679.500 773.500 677.500" fill="none" stroke="#000" stroke-width="2.8" stroke-linecap="round" stroke-linejoin="round"/>
<path d="M748 677.500 C748.500 679.500 751 680 752.500 678.500" fill="none" stroke="#000" stroke-width="1.6" stroke-linecap="round" stroke-linejoin="round"/>
<path d="M782 668.500 C781.500 666 784.500 665.500 785.500 667.500 L791 681 C792 684 789 686 786.500 684.500" fill="none" stroke="#000" stroke-width="2.8" stroke-linecap="round" stroke-linejoin="round"/>
<path d="M857 663.500 C860.500 661 866 664.500 871 669.500 C877.500 676 884.500 681.500 884.500 689 L884.700 699.500 L881.500 697 L878.500 701.500 L877 696.500 L873 694 C875 690 871 686.500 867.500 683.500 C862 679 855.500 674 855.300 668 C855.300 666 856 664.500 857 663.500 Z" fill="#000"/>
<path d="M919.500 650.500 H928.500 V685 C928.500 689.500 923.500 690.500 919.500 688" fill="none" stroke="#000" stroke-width="2.4" stroke-linecap="butt" stroke-linejoin="round"/>
<path d="M696.500 697 C692.500 696.500 692.500 692.500 696 692.500 C698 692.500 699 694 700 695.500 L706.500 707.500 C708 710 711 709.500 712 707" fill="none" stroke="#000" stroke-width="3" stroke-linecap="round" stroke-linejoin="round"/>
<path d="M716 709 C712 707 711 703.500 714.500 703.500 C716 703.500 716.800 705 717.500 706.500 L721.500 719.500 C722 722 719.500 723 718 721.500" fill="none" stroke="#000" stroke-width="3.2" stroke-linecap="round" stroke-linejoin="round"/>
<path d="M733.600 709 C733.600 704.500 741.700 704.500 741.700 709 V723.500 C741.700 728 733.600 728 733.600 723.500 Z" fill="#000"/>
<rect x="736.500" y="708.500" width="2.300" height="15.500" rx="1.100" fill="#666"/>
<path d="M827 693 C828.500 690 825 688.500 823.500 691 C822.500 693 822.800 696 822.800 699 V704.500 C822.800 708.500 819 709.500 817.800 707" fill="none" stroke="#000" stroke-width="2.6" stroke-linecap="round" stroke-linejoin="round"/>
<path d="M857.500 699.500 C860 701.500 859.500 705.500 856 705.800 C854 706 853 704.500 853.500 703 M855 705.500 C849 708 839.500 705 838.800 696.500 C838.200 688.500 846 684.500 851.500 687.500" fill="none" stroke="#000" stroke-width="3.4" stroke-linecap="round" stroke-linejoin="round"/>
<path d="M849.500 689.500 c1.500 -3 6.500 -2.500 6.500 1 c0 2.500 -4 3 -5 1.500 z" fill="#000"/>
<path d="M930 694 H934.800 V710 C934.800 713.500 931.500 714.500 929.500 712.500" fill="none" stroke="#000" stroke-width="2.2" stroke-linecap="butt" stroke-linejoin="round"/>
<path d="M956 695 V704.500 C956 708 951.500 708.500 950 706.500" fill="none" stroke="#000" stroke-width="2.4" stroke-linecap="butt" stroke-linejoin="round"/>
<path d="M980 699 C973 700 967.500 706 968.500 712 C969.200 716.500 973.500 718 975.500 715.500 C977 713.500 975 711.500 973.500 712.500 C972.500 708 975 703.500 980 702 Z" fill="#000"/>
<text x="749.9" y="733" font-family="'Liberation Sans',sans-serif" font-size="20" fill="#141414">A</text>
<text x="784.1" y="733" font-family="'Liberation Sans',sans-serif" font-size="20" fill="#141414">B</text>
<text x="820.9" y="733" font-family="'Liberation Sans',sans-serif" font-size="20" fill="#141414">C</text>
<text x="857.9" y="733" font-family="'Liberation Sans',sans-serif" font-size="20" fill="#141414">D</text>
<text x="895.1" y="733" font-family="'Liberation Sans',sans-serif" font-size="20" fill="#141414">E</text>
<text x="720.2" y="736.9" font-family="'Liberation Sans',sans-serif" font-size="4.8" fill="#000" stroke="#000" stroke-width=".18" textLength="27.5" lengthAdjust="spacingAndGlyphs">CAP-HEIGHT</text>
<path d="M943.700 713.800 V738.600" stroke="#000" stroke-width="2"/>
<path d="M951 727.500 C949.500 733 949.500 741 951.500 746.500 H954" fill="none" stroke="#000" stroke-width="2.4" stroke-linecap="round" stroke-linejoin="round"/>
<path d="M951 727.500 H955.500 L957.500 730 L959.500 727.500 H963.500 C965 733 965 741 963.500 747 H961" fill="none" stroke="#000" stroke-width="2.4" stroke-linecap="round" stroke-linejoin="round"/>
<path d="M980 732 C973.500 732 969 735 969.300 739.500 C969.500 744 974 746 980 745 V741.500 C976.500 742.500 973.500 741.500 973.300 739.500 L977 739 L976.500 736.500 L980 735.500 Z" fill="#000"/>
<path d="M715.0 757.0 C717.3 758.1 721.4 752.1 723.5 746.3 C724.4 743.3 724.6 741.1 725.2 739.1 L722.8 737.9 C721.2 740.6 718.1 744.8 715.5 749.2 C713.7 752.9 713.5 756.3 715.0 757.0 Z" fill="#000"/>
<circle cx="724.0" cy="738.5" r="2.4"/>
<path d="M721.6 738.5 L721.7 734.3 L723.9 736.3 Z M724.1 736.3 L726.3 734.3 L726.4 738.5 Z" fill="#000"/>
<path d="M712.500 755.500 C713 757.500 715.500 758 716.500 756.500" fill="none" stroke="#000" stroke-width="1.6" stroke-linecap="round" stroke-linejoin="round"/>
<text transform="matrix(0.2761 0 0 0.2836 751.31 756.50)" font-family="'Liberation Sans',sans-serif" font-weight="bold" font-size="100" fill="#000">A</text>
<path d="M753.5 757.0 C756.2 757.8 758.9 752.5 759.8 747.5 C760.0 745.0 759.7 743.1 759.8 741.4 L757.2 740.6 C756.1 742.9 753.8 746.6 752.2 750.5 C751.2 753.7 751.8 756.5 753.5 757.0 Z" fill="#000"/>
<circle cx="758.5" cy="741.0" r="2.4"/>
<path d="M756.1 741.0 L756.2 736.8 L758.4 738.8 Z M758.6 738.8 L760.8 736.8 L760.9 741.0 Z" fill="#000"/>
<path d="M768.500 755.500 C769.500 757.500 772 757 772.200 755" fill="none" stroke="#000" stroke-width="1.6" stroke-linecap="round" stroke-linejoin="round"/>
<path d="M834 741.500 C831 737.500 823.500 738 821 743.500 C818.500 749.500 822 755 828.500 755.500 C834.500 755.800 838 757 837.500 760 C837 762.800 833 762.800 832 760.500" fill="none" stroke="#000" stroke-width="3.4" stroke-linecap="round" stroke-linejoin="round"/>
<ellipse cx="831.500" cy="742.500" rx="1.200" ry="2" fill="#757575" transform="rotate(30 831.500 742.500)"/>
<path d="M857.800 736.800 C867 738 873 742.500 873 748.700 C873 755 867 759.500 857.800 760.600 Z" fill="#000"/>
<path d="M860.500 741 C866.500 741.800 869.800 744.800 869.800 748.700 C869.800 752.500 866.500 755.500 860.500 756.300 M860.500 744.500 C864.500 745 866.500 746.700 866.500 748.700 C866.500 750.700 864.500 752.300 860.500 752.800" fill="none" stroke="#757575" stroke-width="1.100"/><circle cx="862.500" cy="748.700" r="1.200" fill="#757575"/>
<path d="M677.500 750 C673.500 749.500 673.500 745.500 677 745.700 C679 746 679.500 747.500 679.800 749.500 L682.500 762 C683 765 685.500 765.500 686.500 763.500" fill="none" stroke="#000" stroke-width="3" stroke-linecap="round" stroke-linejoin="round"/>
<path d="M647.500 759 C645 757 642 758 642.500 761 L650 780" fill="none" stroke="#000" stroke-width="3.2" stroke-linecap="round" stroke-linejoin="round"/>
<path d="M711.0 790.0 C714.1 790.7 717.2 782.8 718.0 775.5 C718.2 771.9 717.8 769.3 718.0 766.9 L714.8 766.1 C713.6 769.6 711.1 775.2 709.4 781.0 C708.3 785.7 709.1 789.6 711.0 790.0 Z" fill="#000"/>
<circle cx="716.4" cy="766.5" r="2.4"/>
<path d="M714.0 766.5 L714.1 762.3 L716.3 764.3 Z M716.5 764.3 L718.7 762.3 L718.8 766.5 Z" fill="#000"/>
<path d="M717.500 768 L730 788" fill="none" stroke="#000" stroke-width="3" stroke-linecap="round" stroke-linejoin="round"/>
<path d="M957.600 752 C949 753 943.700 758 943.700 764.800 C943.700 771.500 949 777 957.600 778 Z" fill="#000"/>
<path d="M955.500 756.500 C950 757.500 947.200 760.500 947.200 764.800 C947.200 769 950 772.500 955.500 773.500 M955.500 760.500 C952.500 761.200 950.800 762.800 950.800 764.800 C950.800 767 952.500 768.800 955.500 769.500" fill="none" stroke="#757575" stroke-width="1.100"/><circle cx="953.500" cy="764.800" r="1.200" fill="#757575"/>
<path d="M963.500 771 C963.500 774.500 967.500 775.500 969 772.500" fill="none" stroke="#000" stroke-width="2.4" stroke-linecap="round" stroke-linejoin="round"/>
<path d="M973.500 756 V772 C973.500 775 977 776 978.500 774" fill="none" stroke="#000" stroke-width="3" stroke-linecap="round" stroke-linejoin="round"/>
<text x="749.8" y="782.800" font-family="'Liberation Sans',sans-serif" font-size="20" fill="#141414">F</text>
<text x="784.8" y="782.800" font-family="'Liberation Sans',sans-serif" font-size="20" fill="#141414">G</text>
<text x="822.9" y="782.800" font-family="'Liberation Sans',sans-serif" font-size="20" fill="#141414">H</text>
<text x="861.4" y="782.800" font-family="'Liberation Sans',sans-serif" font-size="20" fill="#141414">I</text>
<text x="893.2" y="782.800" font-family="'Liberation Sans',sans-serif" font-size="20" fill="#141414">J</text>
<text x="921.2" y="782.800" font-family="'Liberation Sans',sans-serif" font-size="20" fill="#141414">K</text>
<text transform="matrix(0.2612 0 0 0.2618 175.85 324.00)" font-family="'Liberation Sans',sans-serif" font-weight="bold" font-size="100" fill="#000">A</text>
<path d="M177.5 324.5 C180.3 325.4 183.5 319.5 184.6 313.9 C185.0 311.0 184.7 308.9 184.9 307.0 L182.1 306.0 C180.8 308.6 178.3 312.8 176.4 317.1 C175.2 320.7 175.7 323.9 177.5 324.5 Z" fill="#000"/>
<circle cx="183.5" cy="306.5" r="2.4"/>
<path d="M181.1 306.5 L181.2 302.3 L183.4 304.3 Z M183.6 304.3 L185.8 302.3 L185.9 306.5 Z" fill="#000"/>
<path d="M192 323 C193 325 195.500 324.500 195.500 322.500" fill="none" stroke="#000" stroke-width="1.6" stroke-linecap="round" stroke-linejoin="round"/>
<text transform="matrix(0.2688 0 0 0.3039 240.66 325.70)" font-family="'Liberation Sans',sans-serif" font-weight="normal" font-size="100" fill="#000" stroke="#000" stroke-width="2.45" stroke-linejoin="round">C</text>
<path d="M257.500 325.500 C262.500 326 263 320.500 259.800 321" fill="none" stroke="#000" stroke-width="2.2" stroke-linecap="round" stroke-linejoin="round"/>
<ellipse cx="256.500" cy="307.800" rx="1" ry="1.800" fill="#fff" transform="rotate(-50 256.500 307.800)"/>
<path d="M281.5 303 C291 304 297.5 308.500 297.5 315 C297.5 321.500 291 326 281.5 327 Z" fill="#000"/>
<path d="M284 307.500 C290.500 308 294 311 294 315 C294 319 290.500 322 284 322.700 M284 311 C288 311.500 290.500 313 290.500 315 C290.500 317 288 318.500 284 319" fill="none" stroke="#fff" stroke-width="1.100"/><circle cx="286.500" cy="315" r="1.200" fill="#fff"/>
<text transform="matrix(0.3139 0 0 0.2909 242.41 375.00)" font-family="'Liberation Sans',sans-serif" font-weight="normal" font-size="100" fill="#000" stroke="#000" stroke-width="2.98" stroke-linejoin="round">H</text>
<path d="M241.200 373.800 C242.500 375.800 245.500 375.500 246 373" fill="none" stroke="#000" stroke-width="1.8" stroke-linecap="round" stroke-linejoin="round"/>
<path d="M266.300 355.500 C265 353.300 262 353.800 261.500 356" fill="none" stroke="#000" stroke-width="1.8" stroke-linecap="round" stroke-linejoin="round"/>
<path d="M245 356 C245 353.500 248.500 353.300 249.500 355" fill="none" stroke="#000" stroke-width="1.6" stroke-linecap="round" stroke-linejoin="round"/>
<path d="M258 374.500 C259 376 261.800 376 262.300 374" fill="none" stroke="#000" stroke-width="1.6" stroke-linecap="round" stroke-linejoin="round"/>
<text transform="matrix(0.3568 0 0 0.2909 281.20 375.00)" font-family="'Liberation Sans',sans-serif" font-weight="normal" font-size="100" fill="#000" stroke="#000" stroke-width="2.79" stroke-linejoin="round">I</text>
<path d="M280.200 373.800 C281.500 375.800 284.500 375.500 285.200 373" fill="none" stroke="#000" stroke-width="1.8" stroke-linecap="round" stroke-linejoin="round"/>
<path d="M292.300 356 C291.500 353.300 288 353.300 287.300 356" fill="none" stroke="#000" stroke-width="1.8" stroke-linecap="round" stroke-linejoin="round"/>
<text transform="matrix(0.3049 0 0 0.3011 311.04 375.70)" font-family="'Liberation Sans',sans-serif" font-weight="normal" font-size="100" fill="#000" stroke="#000" stroke-width="1.98" stroke-linejoin="round">J</text>
<g transform="matrix(0.8750 0 0 0.9231 307.50 364.00)"><path d="M7 1.5 C12 4.5 11.5 11 6 11.5 C1.5 11.8 0.5 7 3.5 5.6 C5.8 5 6.8 7.2 5.2 8.3" fill="none" stroke="#000" stroke-width="3.2" stroke-linecap="round"/><path d="M4.8 0 L9 1 L8 4.5 Z"/></g>
<path d="M325 356 C324.500 353.500 321.500 353.500 321 355.500" fill="none" stroke="#000" stroke-width="1.6" stroke-linecap="round" stroke-linejoin="round"/>
<text transform="matrix(0.2841 0 0 0.3127 175.16 427.00)" font-family="'Liberation Sans',sans-serif" font-weight="normal" font-size="100" fill="#000" stroke="#000" stroke-width="3.02" stroke-linejoin="round">L</text>
<text transform="matrix(0.2841 0 0 0.3273 187.16 419.50)" font-family="'Liberation Sans',sans-serif" font-weight="normal" font-size="100" fill="#000" stroke="#000" stroke-width="2.95" stroke-linejoin="round">L</text>
<path d="M175.500 408 C175 405.500 177.500 404.500 178.500 406" fill="none" stroke="#000" stroke-width="1.6" stroke-linecap="round" stroke-linejoin="round"/>
<path d="M187.500 399.500 C187 397 189.500 396 190.500 397.500" fill="none" stroke="#000" stroke-width="1.6" stroke-linecap="round" stroke-linejoin="round"/>
<g transform="matrix(-0.9048 0 0 0.8182 209.00 411.00)"><circle cx="4" cy="4.6" r="3.1"/><path d="M1 4 L1.2 0 L4 2 Z M4.6 2 L7 0 L7.2 4 Z"/><ellipse cx="9.5" cy="8" rx="7" ry="3"/><path d="M13 9.5 C17 11 20 9.5 19.5 6.8 C19 4.5 16.3 5 17 7" fill="none" stroke="#000" stroke-width="1.6" stroke-linecap="round"/></g>
<g transform="matrix(-0.9524 0 0 0.7727 198.00 419.00)"><circle cx="4" cy="4.6" r="3.1"/><path d="M1 4 L1.2 0 L4 2 Z M4.6 2 L7 0 L7.2 4 Z"/><ellipse cx="9.5" cy="8" rx="7" ry="3"/><path d="M13 9.5 C17 11 20 9.5 19.5 6.8 C19 4.5 16.3 5 17 7" fill="none" stroke="#000" stroke-width="1.6" stroke-linecap="round"/></g>
<text transform="matrix(0.2547 0 0 0.2982 217.40 424.50)" font-family="'Liberation Sans',sans-serif" font-weight="normal" font-size="100" fill="#000" stroke="#000" stroke-width="3.27" stroke-linejoin="round">M</text>
<path d="M215.800 423.500 C217 425.500 220 425 220.300 422.500" fill="none" stroke="#000" stroke-width="1.8" stroke-linecap="round" stroke-linejoin="round"/>
<path d="M224 405.500 C224 403 227 402.500 227.500 404.500 M238.800 405 C238.500 402.800 235.500 402.800 235 405" fill="none" stroke="#000" stroke-width="1.5" stroke-linecap="round" stroke-linejoin="round"/>
<text transform="matrix(0.2870 0 0 0.2982 245.13 424.50)" font-family="'Liberation Sans',sans-serif" font-weight="normal" font-size="100" fill="#000" stroke="#000" stroke-width="3.08" stroke-linejoin="round">N</text>
<path d="M243.800 423.500 C245 425.500 248 425 248.300 422.500" fill="none" stroke="#000" stroke-width="1.8" stroke-linecap="round" stroke-linejoin="round"/>
<path d="M266.700 404.500 C266 402.500 263 402.800 262.800 405" fill="none" stroke="#000" stroke-width="1.6" stroke-linecap="round" stroke-linejoin="round"/>
<path d="M290 402.5 C292 406 299.4 408 299.4 415.5 C299.4 423 292 425 290 428.2 C288 425 280.8 423 280.8 415.5 C280.8 408 288 406 290 402.5 Z" fill="#000"/>
<ellipse cx="290" cy="415.5" rx="5.2" ry="5.2" fill="none" stroke="#fff" stroke-width="1.300"/><path d="M290 418 C287.5 418 288 413.5 290.8 413.8" fill="none" stroke="#fff" stroke-width="1.100"/>
<ellipse cx="185" cy="464.3" rx="8.5" ry="9.600" fill="none" stroke="#000" stroke-width="3.600"/>
<path d="M180 472 C184 474 190 476 188.5 478.5 C187 480.5 182 479.5 181 478" fill="none" stroke="#000" stroke-width="2.2" stroke-linecap="round" stroke-linejoin="round"/>
<ellipse cx="190" cy="466.5" rx="1.4" ry="2.6" fill="#fff" transform="rotate(15 190 466.5)"/>
<path d="M188.5 462.0 L188.8 459.0 L190.3 461.1 L192.2 459.0 L192.5 462.0 Z" fill="#000"/>
<text transform="matrix(0.2261 0 0 0.3110 249.48 475.69)" font-family="'Liberation Sans',sans-serif" font-weight="normal" font-size="100" fill="#000" stroke="#000" stroke-width="3.02" stroke-linejoin="round">S</text>
<ellipse cx="260.300" cy="459.500" rx="3" ry="4.600" transform="rotate(28 260.300 459.500)"/><ellipse cx="260.300" cy="459.300" rx=".900" ry="1.700" fill="#fff" transform="rotate(28 260.300 459.300)"/><circle cx="253" cy="472.300" r="2.100"/>
<text transform="matrix(0.2478 0 0 0.2909 283.44 476.50)" font-family="'Liberation Sans',sans-serif" font-weight="normal" font-size="100" fill="#000" stroke="#000" stroke-width="2.61" stroke-linejoin="round">T</text>
<path d="M286.500 475.500 C287.500 477.200 290 477 290.500 475" fill="none" stroke="#000" stroke-width="1.6" stroke-linecap="round" stroke-linejoin="round"/>
<g transform="matrix(0.6190 0 0 0.8636 280.00 449.50)"><circle cx="4" cy="4.6" r="3.1"/><path d="M1 4 L1.2 0 L4 2 Z M4.6 2 L7 0 L7.2 4 Z"/><ellipse cx="9.5" cy="8" rx="7" ry="3"/><path d="M13 9.5 C17 11 20 9.5 19.5 6.8 C19 4.5 16.3 5 17 7" fill="none" stroke="#000" stroke-width="1.6" stroke-linecap="round"/></g>
<path d="M293 457 C297 458 299.5 456 298.5 453.5" fill="none" stroke="#000" stroke-width="1.8" stroke-linecap="round" stroke-linejoin="round"/>
<text transform="matrix(0.2452 0 0 0.2938 179.82 525.20)" font-family="'Liberation Sans',sans-serif" font-weight="bold" font-size="100" fill="#000">V</text>
<path d="M187.5 525.5 C190.5 526.7 194.1 520.8 195.4 515.1 C195.9 512.2 195.7 510.0 196.0 508.1 L193.0 506.9 C191.6 509.5 188.7 513.5 186.6 517.9 C185.2 521.5 185.6 524.8 187.5 525.5 Z" fill="#000"/>
<circle cx="194.5" cy="507.5" r="2.4"/>
<path d="M192.1 507.5 L192.2 503.3 L194.4 505.3 Z M194.6 505.3 L196.8 503.3 L196.9 507.5 Z" fill="#000"/>
<path d="M181.5 506.500 C181 504.500 184 504 184.500 506" fill="none" stroke="#000" stroke-width="1.5" stroke-linecap="round" stroke-linejoin="round"/>
<path d="M208 505.500 C209.500 503.800 212 504.500 212.500 507 L216.500 521 C217.500 524 220 524.500 221 522.500" fill="none" stroke="#000" stroke-width="2.6" stroke-linecap="round" stroke-linejoin="round"/>
<text transform="matrix(0.2605 0 0 0.2938 218.30 525.20)" font-family="'Liberation Sans',sans-serif" font-weight="bold" font-size="100" fill="#000">V</text>
<path d="M226.5 525.5 C229.5 526.7 233.1 520.8 234.4 515.1 C234.9 512.2 234.7 510.0 235.0 508.1 L232.0 506.9 C230.6 509.5 227.7 513.5 225.6 517.9 C224.2 521.5 224.6 524.8 226.5 525.5 Z" fill="#000"/>
<circle cx="233.5" cy="507.5" r="2.4"/>
<path d="M231.1 507.5 L231.2 503.3 L233.4 505.3 Z M233.6 505.3 L235.8 503.3 L235.9 507.5 Z" fill="#000"/>
<path d="M220 506.500 C219.500 504.500 222.500 504 223 506" fill="none" stroke="#000" stroke-width="1.5" stroke-linecap="round" stroke-linejoin="round"/>
<text transform="matrix(0.2471 0 0 0.2764 250.75 525.00)" font-family="'Liberation Sans',sans-serif" font-weight="bold" font-size="100" fill="#000">X</text>
<path d="M252.5 525.5 C255.1 527.0 259.6 521.4 261.9 515.8 C262.9 512.9 263.1 510.7 263.8 508.7 L261.2 507.3 C259.4 509.7 255.9 513.5 253.1 517.7 C251.1 521.2 250.9 524.6 252.5 525.5 Z" fill="#000"/>
<circle cx="262.5" cy="508.0" r="2.4"/>
<path d="M260.1 508.0 L260.2 503.8 L262.4 505.8 Z M262.6 505.8 L264.8 503.8 L264.9 508.0 Z" fill="#000"/>
<path d="M252 507.500 C253.500 506 255.500 506.500 256.500 508.500 L264 521.500 C265 523.500 267 523.500 267.500 522" fill="none" stroke="#000" stroke-width="2.6" stroke-linecap="round" stroke-linejoin="round"/>
<text transform="matrix(0.2213 0 0 0.2880 289.11 524.80)" font-family="'Liberation Sans',sans-serif" font-weight="bold" font-size="100" fill="#000">Y</text>
<path d="M296.0 517.0 C298.4 518.1 301.0 514.6 301.9 511.1 C302.2 509.2 302.0 507.8 302.2 506.5 L299.8 505.5 C298.8 507.0 296.6 509.3 295.1 511.9 C294.1 514.1 294.5 516.3 296.0 517.0 Z" fill="#000"/>
<circle cx="301.0" cy="506.0" r="2.4"/>
<path d="M298.6 506.0 L298.7 501.8 L300.9 503.8 Z M301.1 503.8 L303.3 501.8 L303.4 506.0 Z" fill="#000"/>
<path d="M290.500 506 C290 504.300 292.500 504 293.500 505.500" fill="none" stroke="#000" stroke-width="1.5" stroke-linecap="round" stroke-linejoin="round"/>
<path d="M293 524.200 C294.500 525.300 296.500 524.500 296.500 522.500" fill="none" stroke="#000" stroke-width="1.6" stroke-linecap="round" stroke-linejoin="round"/>
<text x="447.1" y="303.6" font-family="'Liberation Sans',sans-serif" font-size="5.4" fill="#000" stroke="#000" stroke-width=".18" textLength="38.7" lengthAdjust="spacingAndGlyphs">STROKE - LINEAR</text>
<text x="443.0" y="311.4" font-family="'Liberation Sans',sans-serif" font-size="5.4" fill="#000" stroke="#000" stroke-width=".18" textLength="70.6" lengthAdjust="spacingAndGlyphs">STEM - MAIN VERTICAL STROKE</text>
<text x="401.2" y="336.2" font-family="'Liberation Sans',sans-serif" font-size="5.4" fill="#000" stroke="#000" stroke-width=".18" textLength="11.8" lengthAdjust="spacingAndGlyphs">TITLE</text>
<text x="430.0" y="337.6" font-family="'Liberation Sans',sans-serif" font-size="5.4" fill="#000" stroke="#000" stroke-width=".18" textLength="12.0" lengthAdjust="spacingAndGlyphs">APEX</text>
<text x="469.4" y="347.9" font-family="'Liberation Sans',sans-serif" font-size="5.4" fill="#000" stroke="#000" stroke-width=".18" textLength="9.3" lengthAdjust="spacingAndGlyphs">BAR</text>
<text x="390.0" y="369.2" font-family="'Liberation Sans',sans-serif" font-size="5.4" fill="#000" stroke="#000" stroke-width=".18" textLength="88.7" lengthAdjust="spacingAndGlyphs">TERMINAL (WHRN TWO STROKE MEETS)</text>
<text x="427.6" y="382.1" font-family="'Liberation Sans',sans-serif" font-size="5.4" fill="#000" stroke="#000" stroke-width=".18" textLength="25.1" lengthAdjust="spacingAndGlyphs">SHOULDER</text>
<text x="399.3" y="385.8" font-family="'Liberation Sans',sans-serif" font-size="5.4" fill="#000" stroke="#000" stroke-width=".18" textLength="13.0" lengthAdjust="spacingAndGlyphs">SERIF</text>
<text x="454.0" y="399.9" font-family="'Liberation Sans',sans-serif" font-size="5.4" fill="#000" stroke="#000" stroke-width=".18" textLength="18.6" lengthAdjust="spacingAndGlyphs">STROKE</text>
<text x="404.9" y="404.9" font-family="'Liberation Sans',sans-serif" font-size="5.4" fill="#000" stroke="#000" stroke-width=".18" textLength="12.5" lengthAdjust="spacingAndGlyphs">STEM</text>
<text x="422.6" y="424.9" font-family="'Liberation Sans',sans-serif" font-size="5.4" fill="#000" stroke="#000" stroke-width=".18" textLength="12.0" lengthAdjust="spacingAndGlyphs">FOOT</text>
<text x="423.8" y="449.2" font-family="'Liberation Sans',sans-serif" font-size="5.4" fill="#000" stroke="#000" stroke-width=".18" textLength="13.2" lengthAdjust="spacingAndGlyphs">BOWL</text>
<text x="412.2" y="478.7" font-family="'Liberation Sans',sans-serif" font-size="5.4" fill="#000" stroke="#000" stroke-width=".18" textLength="15.8" lengthAdjust="spacingAndGlyphs">LOOPE</text>
<text x="499.5" y="485.5" font-family="'Liberation Sans',sans-serif" font-size="5.4" fill="#000" stroke="#000" stroke-width=".18" textLength="93.0" lengthAdjust="spacingAndGlyphs">JOINT ( WHEN STROKE AND STEM MEETS)</text>
<text x="517.5" y="332.8" font-family="'Liberation Sans',sans-serif" font-size="5.4" fill="#000" stroke="#000" stroke-width=".18" textLength="128.3" lengthAdjust="spacingAndGlyphs">ARM( DOES NOT CONNECT ANY END ONE OR BOTH ENDS)</text>
<text x="526.8" y="354.7" font-family="'Liberation Sans',sans-serif" font-size="5.4" fill="#000" stroke="#000" stroke-width=".18" textLength="82.2" lengthAdjust="spacingAndGlyphs">ARC OF STEM - WHEN STEM CURVES</text>
<text x="540.2" y="395.1" font-family="'Liberation Sans',sans-serif" font-size="5.4" fill="#000" stroke="#000" stroke-width=".18" textLength="12.1" lengthAdjust="spacingAndGlyphs">APEX</text>
<path d="M427.2 321.8 C428.5 323.5 432 325 432 328 C432 330 430.5 330.6 427.2 330.6 C424 330.6 422.5 330 422.5 328 C422.5 325 426 323.5 427.2 321.8 Z" fill="#000"/>
<path d="M425 328.8 C425.5 326.5 429 326.5 429.5 328.8" fill="none" stroke="#fff" stroke-width=".8"/>
<g transform="matrix(0.9000 0 0 0.9154 398.80 342.20)"><path d="M7 1.5 C12 4.5 11.5 11 6 11.5 C1.5 11.8 0.5 7 3.5 5.6 C5.8 5 6.8 7.2 5.2 8.3" fill="none" stroke="#000" stroke-width="3.2" stroke-linecap="round"/><path d="M4.8 0 L9 1 L8 4.5 Z"/></g>
<path d="M449 346 H463.8 V349.7 H449 Z" fill="#000"/>
<path d="M379 364.6 C378.5 360 381 357.5 384 357.5 C387 357.5 388 360 388 361.5 L389.2 363.5 L386 362.5 C385.5 361 383.5 361 383 362.5 L382.5 364.6 Z" fill="#000"/>
<path d="M345.8 378 C347.5 381.5 355.5 383.5 355.5 390 C355.5 393.5 354.5 395.5 353 396.5 H338.5 C337 395.5 336 393.5 336 390 C336 383.5 344 381.5 345.8 378 Z" fill="#000"/>
<path d="M340 394.5 C338.5 388 347 384 351 388.5 C353.5 392 349.500 396 345.5 394 C342.5 392 345.500 388.5 348 390.5" fill="none" stroke="#fff" stroke-width="1.2"/>
<path d="M389 386.9 C389 384 391 383 392.8 383 C395 383 396.5 384.5 396.5 386.9 H394.5 C394.5 385.5 392.5 385.3 392.3 386.9 Z" fill="#000"/>
<path d="M447 391.5 H450.5 L451.2 407 C451.3 408.5 452 409.500 451.7 410 H446.7 C447.3 409 447.2 408 447.200 406.500 Z" fill="#000"/>
<path d="M439.5 420.2 C438 422.5 439.500 424.500 441.5 424.500 H445.2" fill="none" stroke="#000" stroke-width="2.2" stroke-linecap="round" stroke-linejoin="round"/>
<path d="M370.5 428 L372.500 431.500 C380 430 387.500 434 387.300 440.500 C387 447.500 378 452 369 449.800 C362.500 448 360 442 363.5 438.500 C366.500 436 370.500 438 369.500 441 C369 442.500 367 442.500 366.800 441 C365.500 444 369.500 446.500 373.500 444.500 C378.500 442 378.500 436 374 433.800 L369.500 433.500 Z" fill="#000"/>
<g transform="matrix(0.7900 0 0 0.7400 403.80 441.20)"><ellipse cx="10" cy="10" rx="9.6" ry="9.6"/><ellipse cx="10" cy="10" rx="5.8" ry="5.8" fill="none" stroke="#fff" stroke-width="1.3"/><path d="M10 13 C7.5 13 7.5 8.5 10.5 8.5" fill="none" stroke="#fff" stroke-width="1.2"/></g>
<path d="M459 430 L463 433 C471 434.500 478.500 441 476.500 447.500 C474.500 454 466 453.500 463.500 455.500 C461.500 458.500 456.500 458.800 455 455.500 C454 452.500 457.500 450.500 459 452.800 C460 450 465.500 449 467.500 444 C469 440 465 436.500 460 436 L457.500 433.500 Z" fill="#000"/>
<g transform="matrix(0.8700 0 0 0.7600 485.60 448.60)"><ellipse cx="10" cy="10" rx="9.6" ry="9.6"/><ellipse cx="10" cy="10" rx="5.8" ry="5.8" fill="none" stroke="#fff" stroke-width="1.3"/><path d="M10 13 C7.5 13 7.5 8.5 10.5 8.5" fill="none" stroke="#fff" stroke-width="1.2"/></g>
<rect x="497.8" y="446" width="7" height="20" fill="#fff"/>
<path d="M343.7 478 H368 C367.500 487.500 362 494 355.800 494 C349.500 494 344.200 487.500 343.700 478 Z" fill="#000"/>
<path d="M349 480.500 C349 489.500 362.500 489.500 362.500 480.500 M352.500 480.500 C352.500 486.500 359.500 486.500 359.500 480.500" fill="none" stroke="#fff" stroke-width="1.1"/>
<path d="M414.500 485 C411.500 487.500 413.500 491 418.500 489.200 C425.500 487 431.500 491.500 431 498 C430.500 505.500 423 510.500 416 508.500 C410.500 507 409.500 500.500 412 497" fill="none" stroke="#000" stroke-width="3.4" stroke-linecap="round" stroke-linejoin="round"/>
<path d="M412 497 C414 501 417 503 421 503.5" fill="none" stroke="#000" stroke-width="1.2" stroke-linecap="round" stroke-linejoin="round"/>
<path d="M473.500 503.500 C476 503 480.500 501.800 481.500 499.500 C482.500 497.500 479 496.800 476.500 498 C479 498.500 478 500.500 476 501.500 Z" fill="#000"/>
<text transform="matrix(0.1828 0 0 0.3273 369.36 536.50)" font-family="'Liberation Sans',sans-serif" font-weight="bold" font-size="100" fill="#000" stroke="#000" stroke-width="1.23" stroke-linejoin="round">1</text>
<g transform="matrix(0.9143 0 0 0.9727 434.80 541.00)"><circle cx="4" cy="4.6" r="3.1"/><path d="M1 4 L1.2 0 L4 2 Z M4.6 2 L7 0 L7.2 4 Z"/><ellipse cx="9.5" cy="8" rx="7" ry="3"/><path d="M13 9.5 C17 11 20 9.5 19.5 6.8 C19 4.5 16.3 5 17 7" fill="none" stroke="#000" stroke-width="1.6" stroke-linecap="round"/></g>
<g transform="matrix(0.9333 0 0 0.9727 454.80 541.00)"><circle cx="4" cy="4.6" r="3.1"/><path d="M1 4 L1.2 0 L4 2 Z M4.6 2 L7 0 L7.2 4 Z"/><ellipse cx="9.5" cy="8" rx="7" ry="3"/><path d="M13 9.5 C17 11 20 9.5 19.5 6.8 C19 4.5 16.3 5 17 7" fill="none" stroke="#000" stroke-width="1.6" stroke-linecap="round"/></g>
<g transform="matrix(-0.9381 0 0 1.0000 465.00 558.20)"><circle cx="4" cy="4.6" r="3.1"/><path d="M1 4 L1.2 0 L4 2 Z M4.6 2 L7 0 L7.2 4 Z"/><ellipse cx="9.5" cy="8" rx="7" ry="3"/><path d="M13 9.5 C17 11 20 9.5 19.5 6.8 C19 4.5 16.3 5 17 7" fill="none" stroke="#000" stroke-width="1.6" stroke-linecap="round"/></g>
<g transform="matrix(0.7722 0 0 0.8765 540.20 298.00)"><path d="M2.5 6.500 C0.500 13 5 17.500 10.500 16.800 C15.500 16 18 11.500 17 6.500 L14.500 3 C14.500 6.500 12.500 9.500 9.500 9.500 C6.500 9.500 5.500 7 5.800 5 C6 3.200 8 3 8.200 4.500 C9 2.500 7 0.800 5 1.500 C3.200 2.200 2.800 4.500 2.500 6.500 Z"/><circle cx="15.200" cy="5.200" r="2.600"/><path d="M12.500 5 L12.800 0.800 L15 3 Z M15.500 3 L17.800 1 L17.900 5.500 Z"/></g>
<text transform="matrix(0.4222 0 0 0.3701 561.26 315.33)" font-family="'Liberation Sans',sans-serif" font-weight="normal" font-size="100" fill="#000" stroke="#000" stroke-width="1.52" stroke-linejoin="round">b</text>
<path d="M561.500 314 C562.500 316 565.500 315.800 566 313.500" fill="none" stroke="#000" stroke-width="1.8" stroke-linecap="round" stroke-linejoin="round"/>
<path d="M562.500 291 C562 288.800 564.500 288 565.500 289.500" fill="none" stroke="#000" stroke-width="1.5" stroke-linecap="round" stroke-linejoin="round"/>
<g transform="matrix(0.7000 0 0 0.7500 569.00 300.50)"><ellipse cx="10" cy="10" rx="9.6" ry="9.6"/><ellipse cx="10" cy="10" rx="5.8" ry="5.8" fill="none" stroke="#fff" stroke-width="1.3"/><path d="M10 13 C7.5 13 7.5 8.5 10.5 8.5" fill="none" stroke="#fff" stroke-width="1.2"/></g>
<g transform="matrix(-0.7778 0 0 0.9412 612.70 292.80)"><path d="M2.5 6.500 C0.500 13 5 17.500 10.500 16.800 C15.500 16 18 11.500 17 6.500 L14.500 3 C14.500 6.500 12.500 9.500 9.500 9.500 C6.500 9.500 5.500 7 5.800 5 C6 3.200 8 3 8.200 4.500 C9 2.500 7 0.800 5 1.500 C3.200 2.200 2.800 4.500 2.500 6.500 Z"/><circle cx="15.200" cy="5.200" r="2.600"/><path d="M12.500 5 L12.800 0.800 L15 3 Z M15.500 3 L17.800 1 L17.900 5.500 Z"/></g>
<path d="M542.6 338.500 H556 C559.500 338 561 341 560.300 343.500 C559.500 346 556 345.800 556 343.500 C556 342 554.500 341.800 552 341.800 H542.600 Z" fill="#000"/>
<path d="M556.500 373.500 C557.500 370.500 560 369 563 370 H575 C579 369.500 580.500 372.500 579.700 375 C579 377.500 575.500 377.800 575.300 375.500 C575.300 373.800 574 373.500 571.500 373.500 Z" fill="#000"/>
<text transform="matrix(0.3897 0 0 0.3767 496.28 384.40)" font-family="'Liberation Sans',sans-serif" font-weight="normal" font-size="100" fill="#000" stroke="#000" stroke-width="2.61" stroke-linejoin="round">F</text>
<path d="M518.500 359 C519.800 360 519.500 362 518 362.500" fill="none" stroke="#000" stroke-width="1.5" stroke-linecap="round" stroke-linejoin="round"/>
<path d="M497.500 359.500 C497 357.500 500 357 500.500 358.800" fill="none" stroke="#000" stroke-width="1.4" stroke-linecap="round" stroke-linejoin="round"/>
<path d="M497.500 382.500 C497 385 500.500 385 500.500 383" fill="none" stroke="#000" stroke-width="1.4" stroke-linecap="round" stroke-linejoin="round"/>
<g transform="matrix(1.1167 0 0 1.1385 525.30 357.90)"><path d="M7 1.5 C12 4.5 11.5 11 6 11.5 C1.5 11.8 0.5 7 3.5 5.6 C5.8 5 6.8 7.2 5.2 8.3" fill="none" stroke="#000" stroke-width="3.2" stroke-linecap="round"/><path d="M4.8 0 L9 1 L8 4.5 Z"/></g>
<path d="M563.500 389.500 C562 391 562.500 393.500 564.500 393.600 H568.500" fill="none" stroke="#000" stroke-width="2" stroke-linecap="round" stroke-linejoin="round"/>
<text transform="matrix(0.3547 0 0 0.3855 518.41 422.50)" font-family="'Liberation Sans',sans-serif" font-weight="normal" font-size="100" fill="#000" stroke="#000" stroke-width="2.97" stroke-linejoin="round">A</text>
<path d="M527.8 395.8 L528.0 392.3 L529.8 394.8 L532.0 392.3 L532.2 395.8 Z" fill="#000"/>
<path d="M516 420.500 C515 423 519 423.500 519.500 421.500" fill="none" stroke="#000" stroke-width="1.5" stroke-linecap="round" stroke-linejoin="round"/>
<path d="M544.500 420.500 C545.500 423 541.500 423.500 541 421.500" fill="none" stroke="#000" stroke-width="1.5" stroke-linecap="round" stroke-linejoin="round"/>
<g transform="matrix(0.9905 0 0 1.0091 658.20 395.60)"><circle cx="4" cy="4.6" r="3.1"/><path d="M1 4 L1.2 0 L4 2 Z M4.6 2 L7 0 L7.2 4 Z"/><ellipse cx="9.5" cy="8" rx="7" ry="3"/><path d="M13 9.5 C17 11 20 9.5 19.5 6.8 C19 4.5 16.3 5 17 7" fill="none" stroke="#000" stroke-width="1.6" stroke-linecap="round"/></g>
<path d="M564.500 436 L560.500 453.500" fill="none" stroke="#000" stroke-width="3.2" stroke-linecap="butt" stroke-linejoin="round"/>
<path d="M556 459.500 C555 461.500 556.500 462.500 558 462 L561 461.500" fill="none" stroke="#000" stroke-width="1.6" stroke-linecap="round" stroke-linejoin="round"/>
<path d="M750 278.500 L751 276.800 L753.300 278 L755.700 276.800 L757 278.500 C757.500 281.500 755 284 753.400 284.400 C751.500 284 749.500 281.500 750 278.500 Z" fill="#000"/>
<path d="M709 313.300 H714 C715.500 313.300 715.800 311 714.500 309.500" fill="none" stroke="#000" stroke-width="1.8" stroke-linecap="round" stroke-linejoin="round"/>
<path d="M734.500 408.500 V415 C734.500 417.500 738 417.800 739.500 415.500" fill="none" stroke="#000" stroke-width="2.2" stroke-linecap="round" stroke-linejoin="round"/>
<rect x="673" y="473" width="2" height="1" fill="#bbb"/>
<rect x="120" y="240.200" width="657" height="355" fill="none" stroke="#fff" stroke-width="2"/>
<rect x="120" y="240.200" width="657" height="355" fill="none" stroke="#4585d0" stroke-width="2" stroke-dasharray="5 5"/>
<rect x="116.5" y="237.0" width="7" height="7" fill="#fff" stroke="#4a87cf" stroke-width="1"/>
<rect x="445.0" y="237.0" width="7" height="7" fill="#fff" stroke="#4a87cf" stroke-width="1"/>
<rect x="774.0" y="237.0" width="7" height="7" fill="#fff" stroke="#4a87cf" stroke-width="1"/>
<rect x="116.5" y="414.5" width="7" height="7" fill="#fff" stroke="#4a87cf" stroke-width="1"/>
<rect x="774.0" y="414.5" width="7" height="7" fill="#fff" stroke="#4a87cf" stroke-width="1"/>
<rect x="116.5" y="592.0" width="7" height="7" fill="#fff" stroke="#4a87cf" stroke-width="1"/>
<rect x="445.0" y="592.0" width="7" height="7" fill="#fff" stroke="#4a87cf" stroke-width="1"/>
<rect x="774.0" y="592.0" width="7" height="7" fill="#fff" stroke="#4a87cf" stroke-width="1"/>
<rect x="120.500" y="241.500" width="67" height="19" fill="#cfe3fb" stroke="#111" stroke-width="1"/>
<text x="122.300" y="255" font-family="'Liberation Sans',sans-serif" font-size="10" fill="#000" stroke="#000" stroke-width=".2" textLength="62.800" lengthAdjust="spacingAndGlyphs">04 - Artboard 9</text>
</svg>
<!-- floating panel -->
<div style="left:936px;top:70px;width:41px;height:238px;background:#535353;border-radius:3px 3px 0 0;box-shadow:0 1px 5px rgba(0,0,0,.45)"></div>
<div style="left:936px;top:70px;width:41px;height:12px;background:#474747;border-radius:3px 3px 0 0"></div>
<div style="left:936px;top:82px;width:41px;height:1px;background:#3e3e3e"></div>
<svg style="left:936px;top:70px" width="41" height="238" viewBox="936 70 41 238" fill="none">
<path d="M942.500 73.500 L948 79 M948 73.500 L942.500 79" stroke="#e4e4e4" stroke-width="1.300"/>
<path d="M962.500 74 L964.500 76.300 L962.500 78.600 M966 74 L968 76.300 L966 78.600" stroke="#d0d0d0" stroke-width="1"/>
<path d="M946.5 87 V91 M948.5 87 V91 M950.5 87 V91 M952.5 87 V91 M954.5 87 V91 M956.5 87 V91 M958.5 87 V91 M960.5 87 V91 M962.5 87 V91 M964.5 87 V91 M966.5 87 V91" stroke="#3c3c3c" stroke-width="1"/>
<!-- width tool -->
<path d="M950 110.500 C953 107 956 110 954.500 114 C958 111 962 112.500 960.500 116 C963.500 113.500 966.500 115.500 966 118 C963.500 117 961.500 119 959.500 120.500 C957.500 122 955 121 954.500 118.500 C953 120 951 119 951.500 116.500 C952 114 952.500 112 950 110.500 Z" fill="#d0d0d0"/>
<path d="M949.500 122.500 L960 111.500" stroke="#d0d0d0" stroke-width="1"/><circle cx="949" cy="123" r="1.500" fill="#535353" stroke="#d0d0d0" stroke-width="1"/><circle cx="960.300" cy="111.200" r="1.300" fill="#535353" stroke="#d0d0d0" stroke-width="1"/>
<!-- warp -->
<path d="M947.500 134 H966 V137.200 C961.500 137.500 961.500 144.300 966 144.600 V147.500 H947.500 Z" fill="#d0d0d0"/>
<!-- twirl -->
<path d="M953 159.500 H966 V172 H957.500 V166 H953 Z" fill="#d0d0d0"/>
<path d="M958 171.500 C958.500 177.500 949.500 178.500 948.800 172.500 C948.300 167.500 954.500 166.500 955.200 170.500 C955.600 173 952.600 173.600 952.400 171.800" fill="none" stroke="#d0d0d0" stroke-width="2.300" stroke-linecap="round"/>
<!-- pucker -->
<path d="M947.500 184.500 L953.500 187 L956.500 184 L959.500 187 L966 184.500 L963.500 191 L966 197.500 L959.500 195.500 L956.500 198.500 L953.500 195.500 L947.500 197.500 L950 191 Z" fill="#d0d0d0"/>
<path d="M951 186 L962 196.500 M962 186 L951 196.500" stroke="#535353" stroke-width="1.800"/>
<path d="M954.500 183.500 h4 l-2 2.500z M954.500 199 h4 l-2 -2.500z M947 189.200 v4 l2.500 -2z M966.500 189.200 v4 l-2.500 -2z" fill="#d0d0d0"/>
<!-- bloat -->
<rect x="950.500" y="212.500" width="12" height="9" rx="3.500" fill="#d0d0d0"/>
<path d="M954.500 210.500 h4 l-2 -2.500z M954.500 223.500 h4 l-2 2.500z M948.500 215 v4 l-2.500 -2z M964.500 215 v4 l2.500 -2z" fill="#d0d0d0"/>
<!-- scallop -->
<path d="M947.500 235 H966 V236 C960.500 236.500 960.500 241.800 966 242.300 V243 C960.500 243.500 960.500 248.500 966 249 V249.500 H947.500 Z" fill="#d0d0d0"/>
<!-- crystallize -->
<path d="M950 275 V266 L947.500 264 L951 263.500 L950.500 260 L953.500 262.500 L955.500 259 L957 262.500 L960.500 260.500 L960 264.500 H966 V275 Z" fill="#d0d0d0"/>
<!-- wrinkle -->
<path d="M948 299 V287.500 L951 290.500 L954 286 L957 290.500 L960 286.500 L962.500 290 L965.500 287 V299 Z" fill="#d0d0d0"/>
</svg>

</body></html>
